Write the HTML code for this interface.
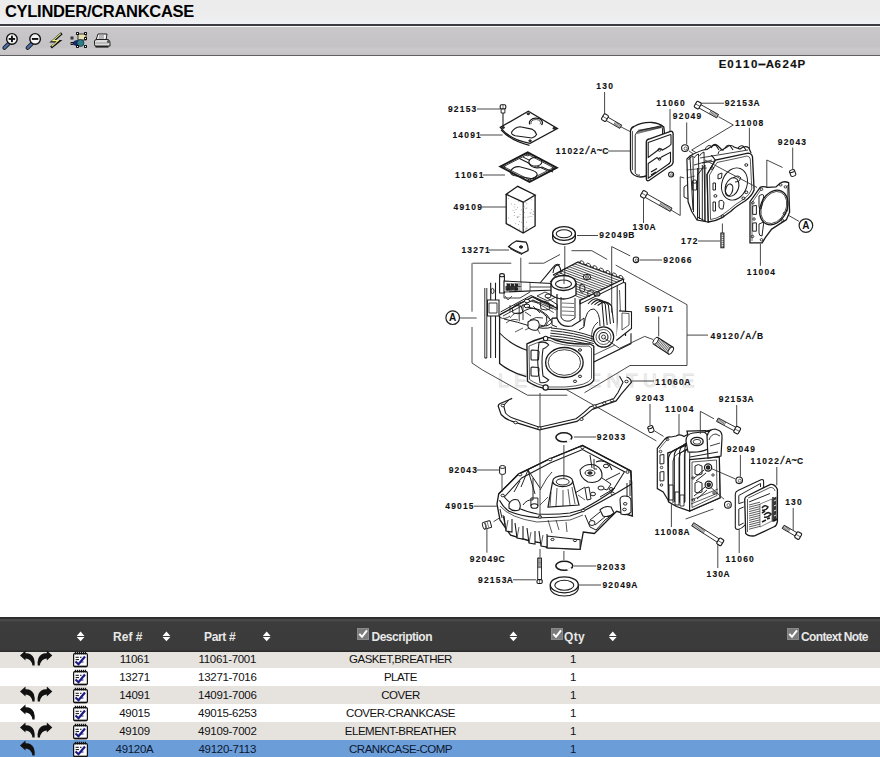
<!DOCTYPE html>
<html><head><meta charset="utf-8">
<style>
*{margin:0;padding:0;box-sizing:border-box}
html,body{width:880px;height:757px;overflow:hidden;background:#fff;font-family:"Liberation Sans",sans-serif}
.a{position:absolute}
#title{left:0;top:0;width:880px;height:24px;background:linear-gradient(#ececec,#ededed 60%,#eff1f5);}
#title span{position:absolute;left:5px;top:2px;font-size:16.5px;font-weight:bold;color:#000;letter-spacing:-0.3px}
#l1{left:0;top:24px;width:880px;height:2px;background:#3b3d42}
#l2{left:0;top:26px;width:880px;height:1px;background:#fafafa}
#tb{left:0;top:27px;width:880px;height:28px;background:linear-gradient(#c9c7ca,#c4c2c5 70%,#cbc9cc 80%,#c4c2c5)}
#l3{left:0;top:55px;width:880px;height:1px;background:#606060}
#th{left:0;top:617px;width:880px;height:35px;background:linear-gradient(#2c2d2c 0,#2c2d2c 2px,#4a4b4a 2px,#474847 4px,#3b3c3b 5px,#3a3b3a 33px,#2a2b2a 34px)}
.row{position:absolute;left:0;width:880px;background:#fff}
.row.g{background:#e6e3df}
.row.sel{background:#6b9dd8}
.c{position:absolute;width:160px;margin-left:-80px;text-align:center;font-size:11.5px;letter-spacing:-0.3px;color:#111;white-space:nowrap}
.sel .c{color:#0c1830}
.h{position:absolute;top:12.6px;font-size:12px;font-weight:bold;color:#e8e8e8;letter-spacing:-0.2px;white-space:nowrap}
svg{position:absolute;left:0;top:0}
</style></head><body>
<div id="title" class="a"><span>CYLINDER/CRANKCASE</span></div>
<div id="l1" class="a"></div><div id="l2" class="a"></div>
<div id="tb" class="a"></div>
<div id="l3" class="a"></div>
<div id="th" class="a">
<span class="h" style="left:113px;letter-spacing:0.05px">Ref #</span>
<span class="h" style="left:204px;letter-spacing:-0.35px">Part #</span>
<span class="h" style="left:371.5px;letter-spacing:-0.5px">Description</span>
<span class="h" style="left:564px;letter-spacing:0.3px">Qty</span>
<span class="h" style="left:801px;letter-spacing:-0.65px">Context Note</span>
</div>
<div class="row g" style="top:652px;height:16px"><span class="c" style="left:134.5px;top:1px">11061</span><span class="c" style="left:227.3px;top:1px">11061-7001</span><span class="c" style="left:400.5px;top:1px;letter-spacing:-0.5px">GASKET,BREATHER</span><span class="c" style="left:573px;top:1px">1</span></div>
<div class="row" style="top:668px;height:18px"><span class="c" style="left:134.5px;top:3px">13271</span><span class="c" style="left:227.3px;top:3px">13271-7016</span><span class="c" style="left:400.5px;top:3px;letter-spacing:-0.5px">PLATE</span><span class="c" style="left:573px;top:3px">1</span></div>
<div class="row g" style="top:686px;height:18px"><span class="c" style="left:134.5px;top:3px">14091</span><span class="c" style="left:227.3px;top:3px">14091-7006</span><span class="c" style="left:400.5px;top:3px;letter-spacing:-0.5px">COVER</span><span class="c" style="left:573px;top:3px">1</span></div>
<div class="row" style="top:704px;height:18px"><span class="c" style="left:134.5px;top:3px">49015</span><span class="c" style="left:227.3px;top:3px">49015-6253</span><span class="c" style="left:400.5px;top:3px;letter-spacing:-0.5px">COVER-CRANKCASE</span><span class="c" style="left:573px;top:3px">1</span></div>
<div class="row g" style="top:722px;height:18px"><span class="c" style="left:134.5px;top:3px">49109</span><span class="c" style="left:227.3px;top:3px">49109-7002</span><span class="c" style="left:400.5px;top:3px;letter-spacing:-0.5px">ELEMENT-BREATHER</span><span class="c" style="left:573px;top:3px">1</span></div>
<div class="row sel" style="top:740px;height:18px"><span class="c" style="left:134.5px;top:3px">49120A</span><span class="c" style="left:227.3px;top:3px">49120-7113</span><span class="c" style="left:400.5px;top:3px;letter-spacing:-0.5px">CRANKCASE-COMP</span><span class="c" style="left:573px;top:3px">1</span></div>
<svg width="880" height="757" viewBox="0 0 880 757">
<line x1="4.4" y1="47.9" x2="8.9" y2="43.4" stroke="#111" stroke-width="4" stroke-linecap="round"/><line x1="4.4" y1="47.9" x2="8.9" y2="43.4" stroke="#4a6fa8" stroke-width="2.2" stroke-linecap="round"/><circle cx="11.9" cy="38.9" r="5.3" fill="#f4f4f4" stroke="#111" stroke-width="1.4"/><rect x="8.7" y="38.0" width="6.4" height="1.9" fill="#111"/><rect x="11.0" y="35.699999999999996" width="1.9" height="6.4" fill="#111"/>
<line x1="27.6" y1="47.9" x2="32.1" y2="43.4" stroke="#111" stroke-width="4" stroke-linecap="round"/><line x1="27.6" y1="47.9" x2="32.1" y2="43.4" stroke="#4a6fa8" stroke-width="2.2" stroke-linecap="round"/><circle cx="35.1" cy="38.9" r="5.3" fill="#f4f4f4" stroke="#111" stroke-width="1.4"/><rect x="31.900000000000002" y="38.0" width="6.4" height="1.9" fill="#111"/>
<path d="M61.8,33.2 L52.8,41.2 L58.8,41.2 L51,47.6" fill="none" stroke="#111" stroke-width="2.6" stroke-linejoin="miter"/>
<path d="M60.8,33.6 L52.8,40.6 L58.2,40.6 L51.8,46.4" fill="none" stroke="#f0f08a" stroke-width="1.1"/>
<rect x="78" y="34" width="8" height="6" fill="#e8e0b0" stroke="#111" stroke-width="0.8"/>
<path d="M72,43 Q76,38 80,41 L80,46 Q75,47 72,43Z" fill="#1c2a6a"/>
<circle cx="80.5" cy="43" r="3.5" fill="#2a8080" stroke="#114" stroke-width="0.6"/>
<rect x="76.1" y="32.1" width="2.8" height="2.8" fill="#000"/><rect x="77.0" y="33.0" width="1" height="1" fill="#fff"/>
<rect x="84.1" y="32.1" width="2.8" height="2.8" fill="#000"/><rect x="85.0" y="33.0" width="1" height="1" fill="#fff"/>
<rect x="70.6" y="36.6" width="2.8" height="2.8" fill="#000"/><rect x="71.5" y="37.5" width="1" height="1" fill="#fff"/>
<rect x="84.1" y="37.1" width="2.8" height="2.8" fill="#000"/><rect x="85.0" y="38.0" width="1" height="1" fill="#fff"/>
<rect x="70.6" y="42.1" width="2.8" height="2.8" fill="#000"/><rect x="71.5" y="43.0" width="1" height="1" fill="#fff"/>
<rect x="76.1" y="45.1" width="2.8" height="2.8" fill="#000"/><rect x="77.0" y="46.0" width="1" height="1" fill="#fff"/>
<rect x="84.1" y="45.1" width="2.8" height="2.8" fill="#000"/><rect x="85.0" y="46.0" width="1" height="1" fill="#fff"/>
<path d="M98,34 L107,34 L106,40 L96,40 Z" fill="#f4f4f4" stroke="#111" stroke-width="0.9"/>
<line x1="99" y1="36" x2="104" y2="36" stroke="#444" stroke-width="0.7"/><line x1="98.5" y1="38" x2="104" y2="38" stroke="#444" stroke-width="0.7"/>
<path d="M94.5,41 Q95,39.5 97,39.5 L108,39.5 Q110,40 110,43 L110,46 L95,46 Q94.5,45 94.5,43Z" fill="#ddd" stroke="#111" stroke-width="0.9"/>
<rect x="95.5" y="46" width="13" height="1.6" fill="#222"/>
<line x1="95.5" y1="43" x2="108" y2="43" stroke="#888" stroke-width="0.8"/>
<circle cx="108.5" cy="41.5" r="1.6" fill="#555"/>
<path d="M80.6,631.6 L84.5,636 L76.69999999999999,636Z M76.69999999999999,637 L84.5,637 L80.6,641.2Z" fill="#fff"/>
<path d="M166.45,631.6 L170.35,636 L162.54999999999998,636Z M162.54999999999998,637 L170.35,637 L166.45,641.2Z" fill="#fff"/>
<path d="M266.7,631.6 L270.59999999999997,636 L262.8,636Z M262.8,637 L270.59999999999997,637 L266.7,641.2Z" fill="#fff"/>
<path d="M513.4,631.6 L517.3,636 L509.5,636Z M509.5,637 L517.3,637 L513.4,641.2Z" fill="#fff"/>
<path d="M612.75,631.6 L616.65,636 L608.85,636Z M608.85,637 L616.65,637 L612.75,641.2Z" fill="#fff"/>
<rect x="357.5" y="628.5" width="11" height="11" fill="#7b7b7b" stroke="#8a8a8a" stroke-width="1"/>
<path d="M359.3,633.8 L362,636.8 L367,630.3" fill="none" stroke="#fff" stroke-width="2"/>
<rect x="551.5" y="628.5" width="11" height="11" fill="#7b7b7b" stroke="#8a8a8a" stroke-width="1"/>
<path d="M553.3,633.8 L556,636.8 L561,630.3" fill="none" stroke="#fff" stroke-width="2"/>
<rect x="787.5" y="628.5" width="11" height="11" fill="#7b7b7b" stroke="#8a8a8a" stroke-width="1"/>
<path d="M789.3,633.8 L792,636.8 L797,630.3" fill="none" stroke="#fff" stroke-width="2"/>
<rect x="73.6" y="653.6" width="13.8" height="13" rx="1.2" fill="#fbfbfd" stroke="#111" stroke-width="1.2"/><line x1="74" y1="666.4" x2="87" y2="666.4" stroke="#111" stroke-width="1.5"/><rect x="74.8" y="651.8" width="1.3" height="2.6" fill="#111"/><rect x="76.8" y="651.8" width="1.3" height="2.6" fill="#111"/><rect x="78.8" y="651.8" width="1.3" height="2.6" fill="#111"/><rect x="80.8" y="651.8" width="1.3" height="2.6" fill="#111"/><rect x="82.8" y="651.8" width="1.3" height="2.6" fill="#111"/><rect x="84.8" y="651.8" width="1.3" height="2.6" fill="#111"/><line x1="75.6" y1="657.3" x2="78.8" y2="657.3" stroke="#111" stroke-width="1"/><line x1="80" y1="657.3" x2="81.5" y2="657.3" stroke="#111" stroke-width="1"/><line x1="75.6" y1="659.6" x2="79" y2="659.6" stroke="#111" stroke-width="1"/><path d="M75.5,661.5 L78.5,664.2 L85,656.5" fill="none" stroke="#1a1a80" stroke-width="2.2"/><line x1="80.5" y1="662" x2="83.5" y2="662" stroke="#1a1a80" stroke-width="1"/>
<rect x="73.6" y="671.6" width="13.8" height="13" rx="1.2" fill="#fbfbfd" stroke="#111" stroke-width="1.2"/><line x1="74" y1="684.4" x2="87" y2="684.4" stroke="#111" stroke-width="1.5"/><rect x="74.8" y="669.8" width="1.3" height="2.6" fill="#111"/><rect x="76.8" y="669.8" width="1.3" height="2.6" fill="#111"/><rect x="78.8" y="669.8" width="1.3" height="2.6" fill="#111"/><rect x="80.8" y="669.8" width="1.3" height="2.6" fill="#111"/><rect x="82.8" y="669.8" width="1.3" height="2.6" fill="#111"/><rect x="84.8" y="669.8" width="1.3" height="2.6" fill="#111"/><line x1="75.6" y1="675.3" x2="78.8" y2="675.3" stroke="#111" stroke-width="1"/><line x1="80" y1="675.3" x2="81.5" y2="675.3" stroke="#111" stroke-width="1"/><line x1="75.6" y1="677.6" x2="79" y2="677.6" stroke="#111" stroke-width="1"/><path d="M75.5,679.5 L78.5,682.2 L85,674.5" fill="none" stroke="#1a1a80" stroke-width="2.2"/><line x1="80.5" y1="680" x2="83.5" y2="680" stroke="#1a1a80" stroke-width="1"/>
<rect x="73.6" y="689.6" width="13.8" height="13" rx="1.2" fill="#fbfbfd" stroke="#111" stroke-width="1.2"/><line x1="74" y1="702.4" x2="87" y2="702.4" stroke="#111" stroke-width="1.5"/><rect x="74.8" y="687.8" width="1.3" height="2.6" fill="#111"/><rect x="76.8" y="687.8" width="1.3" height="2.6" fill="#111"/><rect x="78.8" y="687.8" width="1.3" height="2.6" fill="#111"/><rect x="80.8" y="687.8" width="1.3" height="2.6" fill="#111"/><rect x="82.8" y="687.8" width="1.3" height="2.6" fill="#111"/><rect x="84.8" y="687.8" width="1.3" height="2.6" fill="#111"/><line x1="75.6" y1="693.3" x2="78.8" y2="693.3" stroke="#111" stroke-width="1"/><line x1="80" y1="693.3" x2="81.5" y2="693.3" stroke="#111" stroke-width="1"/><line x1="75.6" y1="695.6" x2="79" y2="695.6" stroke="#111" stroke-width="1"/><path d="M75.5,697.5 L78.5,700.2 L85,692.5" fill="none" stroke="#1a1a80" stroke-width="2.2"/><line x1="80.5" y1="698" x2="83.5" y2="698" stroke="#1a1a80" stroke-width="1"/>
<rect x="73.6" y="707.6" width="13.8" height="13" rx="1.2" fill="#fbfbfd" stroke="#111" stroke-width="1.2"/><line x1="74" y1="720.4" x2="87" y2="720.4" stroke="#111" stroke-width="1.5"/><rect x="74.8" y="705.8" width="1.3" height="2.6" fill="#111"/><rect x="76.8" y="705.8" width="1.3" height="2.6" fill="#111"/><rect x="78.8" y="705.8" width="1.3" height="2.6" fill="#111"/><rect x="80.8" y="705.8" width="1.3" height="2.6" fill="#111"/><rect x="82.8" y="705.8" width="1.3" height="2.6" fill="#111"/><rect x="84.8" y="705.8" width="1.3" height="2.6" fill="#111"/><line x1="75.6" y1="711.3" x2="78.8" y2="711.3" stroke="#111" stroke-width="1"/><line x1="80" y1="711.3" x2="81.5" y2="711.3" stroke="#111" stroke-width="1"/><line x1="75.6" y1="713.6" x2="79" y2="713.6" stroke="#111" stroke-width="1"/><path d="M75.5,715.5 L78.5,718.2 L85,710.5" fill="none" stroke="#1a1a80" stroke-width="2.2"/><line x1="80.5" y1="716" x2="83.5" y2="716" stroke="#1a1a80" stroke-width="1"/>
<rect x="73.6" y="725.6" width="13.8" height="13" rx="1.2" fill="#fbfbfd" stroke="#111" stroke-width="1.2"/><line x1="74" y1="738.4" x2="87" y2="738.4" stroke="#111" stroke-width="1.5"/><rect x="74.8" y="723.8" width="1.3" height="2.6" fill="#111"/><rect x="76.8" y="723.8" width="1.3" height="2.6" fill="#111"/><rect x="78.8" y="723.8" width="1.3" height="2.6" fill="#111"/><rect x="80.8" y="723.8" width="1.3" height="2.6" fill="#111"/><rect x="82.8" y="723.8" width="1.3" height="2.6" fill="#111"/><rect x="84.8" y="723.8" width="1.3" height="2.6" fill="#111"/><line x1="75.6" y1="729.3" x2="78.8" y2="729.3" stroke="#111" stroke-width="1"/><line x1="80" y1="729.3" x2="81.5" y2="729.3" stroke="#111" stroke-width="1"/><line x1="75.6" y1="731.6" x2="79" y2="731.6" stroke="#111" stroke-width="1"/><path d="M75.5,733.5 L78.5,736.2 L85,728.5" fill="none" stroke="#1a1a80" stroke-width="2.2"/><line x1="80.5" y1="734" x2="83.5" y2="734" stroke="#1a1a80" stroke-width="1"/>
<rect x="73.6" y="743.6" width="13.8" height="13" rx="1.2" fill="#fbfbfd" stroke="#111" stroke-width="1.2"/><line x1="74" y1="756.4" x2="87" y2="756.4" stroke="#111" stroke-width="1.5"/><rect x="74.8" y="741.8" width="1.3" height="2.6" fill="#111"/><rect x="76.8" y="741.8" width="1.3" height="2.6" fill="#111"/><rect x="78.8" y="741.8" width="1.3" height="2.6" fill="#111"/><rect x="80.8" y="741.8" width="1.3" height="2.6" fill="#111"/><rect x="82.8" y="741.8" width="1.3" height="2.6" fill="#111"/><rect x="84.8" y="741.8" width="1.3" height="2.6" fill="#111"/><line x1="75.6" y1="747.3" x2="78.8" y2="747.3" stroke="#111" stroke-width="1"/><line x1="80" y1="747.3" x2="81.5" y2="747.3" stroke="#111" stroke-width="1"/><line x1="75.6" y1="749.6" x2="79" y2="749.6" stroke="#111" stroke-width="1"/><path d="M75.5,751.5 L78.5,754.2 L85,746.5" fill="none" stroke="#1a1a80" stroke-width="2.2"/><line x1="80.5" y1="752" x2="83.5" y2="752" stroke="#1a1a80" stroke-width="1"/>
<path d="M20,655.5 L25.5,650.5 L25.5,653.2 Q31.5,652.8 33.8,658 Q35.2,662 34.6,665.5 L32.4,665.5 Q32,662.2 30,660.2 Q28,658.4 25.5,658.4 L25.5,660.5 Z" fill="#111"/>
<path d="M52.3,655.5 L46.8,650.5 L46.8,653.2 Q40.8,652.8 38.5,658 Q37.1,662 37.7,665.5 L39.9,665.5 Q40.3,662.2 42.3,660.2 Q44.3,658.4 46.8,658.4 L46.8,660.5 Z" fill="#111"/>
<path d="M20,691.5 L25.5,686.5 L25.5,689.2 Q31.5,688.8 33.8,694 Q35.2,698 34.6,701.5 L32.4,701.5 Q32,698.2 30,696.2 Q28,694.4 25.5,694.4 L25.5,696.5 Z" fill="#111"/>
<path d="M52.3,691.5 L46.8,686.5 L46.8,689.2 Q40.8,688.8 38.5,694 Q37.1,698 37.7,701.5 L39.9,701.5 Q40.3,698.2 42.3,696.2 Q44.3,694.4 46.8,694.4 L46.8,696.5 Z" fill="#111"/>
<path d="M20,709.5 L25.5,704.5 L25.5,707.2 Q31.5,706.8 33.8,712 Q35.2,716 34.6,719.5 L32.4,719.5 Q32,716.2 30,714.2 Q28,712.4 25.5,712.4 L25.5,714.5 Z" fill="#111"/>
<path d="M20,727.5 L25.5,722.5 L25.5,725.2 Q31.5,724.8 33.8,730 Q35.2,734 34.6,737.5 L32.4,737.5 Q32,734.2 30,732.2 Q28,730.4 25.5,730.4 L25.5,732.5 Z" fill="#111"/>
<path d="M52.3,727.5 L46.8,722.5 L46.8,725.2 Q40.8,724.8 38.5,730 Q37.1,734 37.7,737.5 L39.9,737.5 Q40.3,734.2 42.3,732.2 Q44.3,730.4 46.8,730.4 L46.8,732.5 Z" fill="#111"/>
<path d="M20,745.5 L25.5,740.5 L25.5,743.2 Q31.5,742.8 33.8,748 Q35.2,752 34.6,755.5 L32.4,755.5 Q32,752.2 30,750.2 Q28,748.4 25.5,748.4 L25.5,750.5 Z" fill="#111"/>
<text x="498" y="387" font-family="Liberation Sans" font-size="19" letter-spacing="5.6" fill="none" stroke="#e2e2e2" stroke-width="1">LEADVENTURE</text>
<g font-family="Liberation Sans" font-weight="bold" fill="#111" stroke="#111" stroke-width="0.15">
<g font-size="11.5" text-anchor="middle"><text x="722.70" y="68.3" transform="matrix(1.0 0 0 1 0.00 0)">E</text><text x="730.56" y="68.3" transform="matrix(1.0 0 0 1 0.00 0)">0</text><text x="738.42" y="68.3" transform="matrix(1.0 0 0 1 0.00 0)">1</text><text x="746.28" y="68.3" transform="matrix(1.0 0 0 1 0.00 0)">1</text><text x="754.14" y="68.3" transform="matrix(1.0 0 0 1 0.00 0)">0</text><rect x="758.60" y="63.70" width="6.8" height="1.6" fill="#111"/><text x="769.86" y="68.3" transform="matrix(1.0 0 0 1 0.00 0)">A</text><text x="777.72" y="68.3" transform="matrix(1.0 0 0 1 0.00 0)">6</text><text x="785.58" y="68.3" transform="matrix(1.0 0 0 1 0.00 0)">2</text><text x="793.44" y="68.3" transform="matrix(1.0 0 0 1 0.00 0)">4</text><text x="801.30" y="68.3" transform="matrix(1.0 0 0 1 0.00 0)">P</text></g>
<g font-size="9.6" text-anchor="middle"><text x="598.70" y="88.9" transform="matrix(0.88 0 0 1 71.84 0)">1</text><text x="604.60" y="88.9" transform="matrix(0.88 0 0 1 72.55 0)">3</text><text x="610.50" y="88.9" transform="matrix(0.88 0 0 1 73.26 0)">0</text></g>
<g font-size="9.6" text-anchor="middle"><text x="450.30" y="112.0" transform="matrix(0.88 0 0 1 54.04 0)">9</text><text x="456.20" y="112.0" transform="matrix(0.88 0 0 1 54.74 0)">2</text><text x="462.10" y="112.0" transform="matrix(0.88 0 0 1 55.45 0)">1</text><text x="468.00" y="112.0" transform="matrix(0.88 0 0 1 56.16 0)">5</text><text x="473.90" y="112.0" transform="matrix(0.88 0 0 1 56.87 0)">3</text></g>
<g font-size="9.6" text-anchor="middle"><text x="658.70" y="106.2" transform="matrix(0.88 0 0 1 79.04 0)">1</text><text x="664.60" y="106.2" transform="matrix(0.88 0 0 1 79.75 0)">1</text><text x="670.50" y="106.2" transform="matrix(0.88 0 0 1 80.46 0)">0</text><text x="676.40" y="106.2" transform="matrix(0.88 0 0 1 81.17 0)">6</text><text x="682.30" y="106.2" transform="matrix(0.88 0 0 1 81.88 0)">0</text></g>
<g font-size="9.6" text-anchor="middle"><text x="727.00" y="106.10000000000001" transform="matrix(0.88 0 0 1 87.24 0)">9</text><text x="732.90" y="106.10000000000001" transform="matrix(0.88 0 0 1 87.95 0)">2</text><text x="738.80" y="106.10000000000001" transform="matrix(0.88 0 0 1 88.66 0)">1</text><text x="744.70" y="106.10000000000001" transform="matrix(0.88 0 0 1 89.36 0)">5</text><text x="750.60" y="106.10000000000001" transform="matrix(0.88 0 0 1 90.07 0)">3</text><text x="756.50" y="106.10000000000001" transform="matrix(0.88 0 0 1 90.78 0)">A</text></g>
<g font-size="9.6" text-anchor="middle"><text x="675.20" y="119.4" transform="matrix(0.88 0 0 1 81.02 0)">9</text><text x="681.10" y="119.4" transform="matrix(0.88 0 0 1 81.73 0)">2</text><text x="687.00" y="119.4" transform="matrix(0.88 0 0 1 82.44 0)">0</text><text x="692.90" y="119.4" transform="matrix(0.88 0 0 1 83.15 0)">4</text><text x="698.80" y="119.4" transform="matrix(0.88 0 0 1 83.86 0)">9</text></g>
<g font-size="9.6" text-anchor="middle"><text x="737.30" y="125.60000000000001" transform="matrix(0.88 0 0 1 88.48 0)">1</text><text x="743.20" y="125.60000000000001" transform="matrix(0.88 0 0 1 89.18 0)">1</text><text x="749.10" y="125.60000000000001" transform="matrix(0.88 0 0 1 89.89 0)">0</text><text x="755.00" y="125.60000000000001" transform="matrix(0.88 0 0 1 90.60 0)">0</text><text x="760.90" y="125.60000000000001" transform="matrix(0.88 0 0 1 91.31 0)">8</text></g>
<g font-size="9.6" text-anchor="middle"><text x="454.80" y="137.7" transform="matrix(0.88 0 0 1 54.58 0)">1</text><text x="460.70" y="137.7" transform="matrix(0.88 0 0 1 55.28 0)">4</text><text x="466.60" y="137.7" transform="matrix(0.88 0 0 1 55.99 0)">0</text><text x="472.50" y="137.7" transform="matrix(0.88 0 0 1 56.70 0)">9</text><text x="478.40" y="137.7" transform="matrix(0.88 0 0 1 57.41 0)">1</text></g>
<g font-size="9.6" text-anchor="middle"><text x="558.00" y="153.7" transform="matrix(0.88 0 0 1 66.96 0)">1</text><text x="563.90" y="153.7" transform="matrix(0.88 0 0 1 67.67 0)">1</text><text x="569.80" y="153.7" transform="matrix(0.88 0 0 1 68.38 0)">0</text><text x="575.70" y="153.7" transform="matrix(0.88 0 0 1 69.08 0)">2</text><text x="581.60" y="153.7" transform="matrix(0.88 0 0 1 69.79 0)">2</text><text x="587.50" y="153.7" transform="matrix(0.88 0 0 1 70.50 0)" font-family="Liberation Mono" font-size="10.1" font-weight="normal" stroke="#111" stroke-width="0.45">/</text><text x="593.40" y="153.7" transform="matrix(0.88 0 0 1 71.21 0)">A</text><text x="599.30" y="153.7" transform="matrix(0.88 0 0 1 71.92 0)" font-family="Liberation Mono" font-size="10.1" font-weight="normal" stroke="#111" stroke-width="0.45">~</text><text x="605.20" y="153.7" transform="matrix(0.88 0 0 1 72.62 0)">C</text></g>
<g font-size="9.6" text-anchor="middle"><text x="780.10" y="144.89999999999998" transform="matrix(0.88 0 0 1 93.61 0)">9</text><text x="786.00" y="144.89999999999998" transform="matrix(0.88 0 0 1 94.32 0)">2</text><text x="791.90" y="144.89999999999998" transform="matrix(0.88 0 0 1 95.03 0)">0</text><text x="797.80" y="144.89999999999998" transform="matrix(0.88 0 0 1 95.74 0)">4</text><text x="803.70" y="144.89999999999998" transform="matrix(0.88 0 0 1 96.44 0)">3</text></g>
<g font-size="9.6" text-anchor="middle"><text x="457.40" y="178.0" transform="matrix(0.88 0 0 1 54.89 0)">1</text><text x="463.30" y="178.0" transform="matrix(0.88 0 0 1 55.60 0)">1</text><text x="469.20" y="178.0" transform="matrix(0.88 0 0 1 56.30 0)">0</text><text x="475.10" y="178.0" transform="matrix(0.88 0 0 1 57.01 0)">6</text><text x="481.00" y="178.0" transform="matrix(0.88 0 0 1 57.72 0)">1</text></g>
<g font-size="9.6" text-anchor="middle"><text x="455.90" y="209.79999999999998" transform="matrix(0.88 0 0 1 54.71 0)">4</text><text x="461.80" y="209.79999999999998" transform="matrix(0.88 0 0 1 55.42 0)">9</text><text x="467.70" y="209.79999999999998" transform="matrix(0.88 0 0 1 56.12 0)">1</text><text x="473.60" y="209.79999999999998" transform="matrix(0.88 0 0 1 56.83 0)">0</text><text x="479.50" y="209.79999999999998" transform="matrix(0.88 0 0 1 57.54 0)">9</text></g>
<g font-size="9.6" text-anchor="middle"><text x="634.90" y="230.5" transform="matrix(0.88 0 0 1 76.19 0)">1</text><text x="640.80" y="230.5" transform="matrix(0.88 0 0 1 76.90 0)">3</text><text x="646.70" y="230.5" transform="matrix(0.88 0 0 1 77.60 0)">0</text><text x="652.60" y="230.5" transform="matrix(0.88 0 0 1 78.31 0)">A</text></g>
<g font-size="9.6" text-anchor="middle"><text x="601.70" y="238.2" transform="matrix(0.88 0 0 1 72.20 0)">9</text><text x="607.60" y="238.2" transform="matrix(0.88 0 0 1 72.91 0)">2</text><text x="613.50" y="238.2" transform="matrix(0.88 0 0 1 73.62 0)">0</text><text x="619.40" y="238.2" transform="matrix(0.88 0 0 1 74.33 0)">4</text><text x="625.30" y="238.2" transform="matrix(0.88 0 0 1 75.04 0)">9</text><text x="631.20" y="238.2" transform="matrix(0.88 0 0 1 75.74 0)">B</text></g>
<g font-size="9.6" text-anchor="middle"><text x="683.40" y="243.6" transform="matrix(0.88 0 0 1 82.01 0)">1</text><text x="689.30" y="243.6" transform="matrix(0.88 0 0 1 82.72 0)">7</text><text x="695.20" y="243.6" transform="matrix(0.88 0 0 1 83.42 0)">2</text></g>
<g font-size="9.6" text-anchor="middle"><text x="463.80" y="252.89999999999998" transform="matrix(0.88 0 0 1 55.66 0)">1</text><text x="469.70" y="252.89999999999998" transform="matrix(0.88 0 0 1 56.36 0)">3</text><text x="475.60" y="252.89999999999998" transform="matrix(0.88 0 0 1 57.07 0)">2</text><text x="481.50" y="252.89999999999998" transform="matrix(0.88 0 0 1 57.78 0)">7</text><text x="487.40" y="252.89999999999998" transform="matrix(0.88 0 0 1 58.49 0)">1</text></g>
<g font-size="9.6" text-anchor="middle"><text x="665.60" y="263.5" transform="matrix(0.88 0 0 1 79.87 0)">9</text><text x="671.50" y="263.5" transform="matrix(0.88 0 0 1 80.58 0)">2</text><text x="677.40" y="263.5" transform="matrix(0.88 0 0 1 81.29 0)">0</text><text x="683.30" y="263.5" transform="matrix(0.88 0 0 1 82.00 0)">6</text><text x="689.20" y="263.5" transform="matrix(0.88 0 0 1 82.70 0)">6</text></g>
<g font-size="9.6" text-anchor="middle"><text x="749.10" y="275.0" transform="matrix(0.88 0 0 1 89.89 0)">1</text><text x="755.00" y="275.0" transform="matrix(0.88 0 0 1 90.60 0)">1</text><text x="760.90" y="275.0" transform="matrix(0.88 0 0 1 91.31 0)">0</text><text x="766.80" y="275.0" transform="matrix(0.88 0 0 1 92.02 0)">0</text><text x="772.70" y="275.0" transform="matrix(0.88 0 0 1 92.72 0)">4</text></g>
<g font-size="9.6" text-anchor="middle"><text x="647.10" y="312.3" transform="matrix(0.88 0 0 1 77.65 0)">5</text><text x="653.00" y="312.3" transform="matrix(0.88 0 0 1 78.36 0)">9</text><text x="658.90" y="312.3" transform="matrix(0.88 0 0 1 79.07 0)">0</text><text x="664.80" y="312.3" transform="matrix(0.88 0 0 1 79.78 0)">7</text><text x="670.70" y="312.3" transform="matrix(0.88 0 0 1 80.48 0)">1</text></g>
<g font-size="9.6" text-anchor="middle"><text x="712.90" y="338.7" transform="matrix(0.88 0 0 1 85.55 0)">4</text><text x="718.80" y="338.7" transform="matrix(0.88 0 0 1 86.26 0)">9</text><text x="724.70" y="338.7" transform="matrix(0.88 0 0 1 86.96 0)">1</text><text x="730.60" y="338.7" transform="matrix(0.88 0 0 1 87.67 0)">2</text><text x="736.50" y="338.7" transform="matrix(0.88 0 0 1 88.38 0)">0</text><text x="742.40" y="338.7" transform="matrix(0.88 0 0 1 89.09 0)" font-family="Liberation Mono" font-size="10.1" font-weight="normal" stroke="#111" stroke-width="0.45">/</text><text x="748.30" y="338.7" transform="matrix(0.88 0 0 1 89.80 0)">A</text><text x="754.20" y="338.7" transform="matrix(0.88 0 0 1 90.50 0)" font-family="Liberation Mono" font-size="10.1" font-weight="normal" stroke="#111" stroke-width="0.45">/</text><text x="760.10" y="338.7" transform="matrix(0.88 0 0 1 91.21 0)">B</text></g>
<g font-size="9.6" text-anchor="middle"><text x="657.70" y="385.0" transform="matrix(0.88 0 0 1 78.92 0)">1</text><text x="663.60" y="385.0" transform="matrix(0.88 0 0 1 79.63 0)">1</text><text x="669.50" y="385.0" transform="matrix(0.88 0 0 1 80.34 0)">0</text><text x="675.40" y="385.0" transform="matrix(0.88 0 0 1 81.05 0)">6</text><text x="681.30" y="385.0" transform="matrix(0.88 0 0 1 81.76 0)">0</text><text x="687.20" y="385.0" transform="matrix(0.88 0 0 1 82.46 0)">A</text></g>
<g font-size="9.6" text-anchor="middle"><text x="637.90" y="400.9" transform="matrix(0.88 0 0 1 76.55 0)">9</text><text x="643.80" y="400.9" transform="matrix(0.88 0 0 1 77.26 0)">2</text><text x="649.70" y="400.9" transform="matrix(0.88 0 0 1 77.96 0)">0</text><text x="655.60" y="400.9" transform="matrix(0.88 0 0 1 78.67 0)">4</text><text x="661.50" y="400.9" transform="matrix(0.88 0 0 1 79.38 0)">3</text></g>
<g font-size="9.6" text-anchor="middle"><text x="721.10" y="402.2" transform="matrix(0.88 0 0 1 86.53 0)">9</text><text x="727.00" y="402.2" transform="matrix(0.88 0 0 1 87.24 0)">2</text><text x="732.90" y="402.2" transform="matrix(0.88 0 0 1 87.95 0)">1</text><text x="738.80" y="402.2" transform="matrix(0.88 0 0 1 88.66 0)">5</text><text x="744.70" y="402.2" transform="matrix(0.88 0 0 1 89.36 0)">3</text><text x="750.60" y="402.2" transform="matrix(0.88 0 0 1 90.07 0)">A</text></g>
<g font-size="9.6" text-anchor="middle"><text x="667.40" y="412.0" transform="matrix(0.88 0 0 1 80.09 0)">1</text><text x="673.30" y="412.0" transform="matrix(0.88 0 0 1 80.80 0)">1</text><text x="679.20" y="412.0" transform="matrix(0.88 0 0 1 81.50 0)">0</text><text x="685.10" y="412.0" transform="matrix(0.88 0 0 1 82.21 0)">0</text><text x="691.00" y="412.0" transform="matrix(0.88 0 0 1 82.92 0)">4</text></g>
<g font-size="9.6" text-anchor="middle"><text x="599.20" y="440.09999999999997" transform="matrix(0.88 0 0 1 71.90 0)">9</text><text x="605.10" y="440.09999999999997" transform="matrix(0.88 0 0 1 72.61 0)">2</text><text x="611.00" y="440.09999999999997" transform="matrix(0.88 0 0 1 73.32 0)">0</text><text x="616.90" y="440.09999999999997" transform="matrix(0.88 0 0 1 74.03 0)">3</text><text x="622.80" y="440.09999999999997" transform="matrix(0.88 0 0 1 74.74 0)">3</text></g>
<g font-size="9.6" text-anchor="middle"><text x="729.00" y="452.4" transform="matrix(0.88 0 0 1 87.48 0)">9</text><text x="734.90" y="452.4" transform="matrix(0.88 0 0 1 88.19 0)">2</text><text x="740.80" y="452.4" transform="matrix(0.88 0 0 1 88.90 0)">0</text><text x="746.70" y="452.4" transform="matrix(0.88 0 0 1 89.60 0)">4</text><text x="752.60" y="452.4" transform="matrix(0.88 0 0 1 90.31 0)">9</text></g>
<g font-size="9.6" text-anchor="middle"><text x="752.90" y="463.7" transform="matrix(0.88 0 0 1 90.35 0)">1</text><text x="758.80" y="463.7" transform="matrix(0.88 0 0 1 91.06 0)">1</text><text x="764.70" y="463.7" transform="matrix(0.88 0 0 1 91.76 0)">0</text><text x="770.60" y="463.7" transform="matrix(0.88 0 0 1 92.47 0)">2</text><text x="776.50" y="463.7" transform="matrix(0.88 0 0 1 93.18 0)">2</text><text x="782.40" y="463.7" transform="matrix(0.88 0 0 1 93.89 0)" font-family="Liberation Mono" font-size="10.1" font-weight="normal" stroke="#111" stroke-width="0.45">/</text><text x="788.30" y="463.7" transform="matrix(0.88 0 0 1 94.60 0)">A</text><text x="794.20" y="463.7" transform="matrix(0.88 0 0 1 95.30 0)" font-family="Liberation Mono" font-size="10.1" font-weight="normal" stroke="#111" stroke-width="0.45">~</text><text x="800.10" y="463.7" transform="matrix(0.88 0 0 1 96.01 0)">C</text></g>
<g font-size="9.6" text-anchor="middle"><text x="451.00" y="473.3" transform="matrix(0.88 0 0 1 54.12 0)">9</text><text x="456.90" y="473.3" transform="matrix(0.88 0 0 1 54.83 0)">2</text><text x="462.80" y="473.3" transform="matrix(0.88 0 0 1 55.54 0)">0</text><text x="468.70" y="473.3" transform="matrix(0.88 0 0 1 56.24 0)">4</text><text x="474.60" y="473.3" transform="matrix(0.88 0 0 1 56.95 0)">3</text></g>
<g font-size="9.6" text-anchor="middle"><text x="447.60" y="509.3" transform="matrix(0.88 0 0 1 53.71 0)">4</text><text x="453.50" y="509.3" transform="matrix(0.88 0 0 1 54.42 0)">9</text><text x="459.40" y="509.3" transform="matrix(0.88 0 0 1 55.13 0)">0</text><text x="465.30" y="509.3" transform="matrix(0.88 0 0 1 55.84 0)">1</text><text x="471.20" y="509.3" transform="matrix(0.88 0 0 1 56.54 0)">5</text></g>
<g font-size="9.6" text-anchor="middle"><text x="787.50" y="505.09999999999997" transform="matrix(0.88 0 0 1 94.50 0)">1</text><text x="793.40" y="505.09999999999997" transform="matrix(0.88 0 0 1 95.21 0)">3</text><text x="799.30" y="505.09999999999997" transform="matrix(0.88 0 0 1 95.92 0)">0</text></g>
<g font-size="9.6" text-anchor="middle"><text x="657.00" y="535.3000000000001" transform="matrix(0.88 0 0 1 78.84 0)">1</text><text x="662.90" y="535.3000000000001" transform="matrix(0.88 0 0 1 79.55 0)">1</text><text x="668.80" y="535.3000000000001" transform="matrix(0.88 0 0 1 80.26 0)">0</text><text x="674.70" y="535.3000000000001" transform="matrix(0.88 0 0 1 80.96 0)">0</text><text x="680.60" y="535.3000000000001" transform="matrix(0.88 0 0 1 81.67 0)">8</text><text x="686.50" y="535.3000000000001" transform="matrix(0.88 0 0 1 82.38 0)">A</text></g>
<g font-size="9.6" text-anchor="middle"><text x="472.10" y="561.7" transform="matrix(0.88 0 0 1 56.65 0)">9</text><text x="478.00" y="561.7" transform="matrix(0.88 0 0 1 57.36 0)">2</text><text x="483.90" y="561.7" transform="matrix(0.88 0 0 1 58.07 0)">0</text><text x="489.80" y="561.7" transform="matrix(0.88 0 0 1 58.78 0)">4</text><text x="495.70" y="561.7" transform="matrix(0.88 0 0 1 59.48 0)">9</text><text x="501.60" y="561.7" transform="matrix(0.88 0 0 1 60.19 0)">C</text></g>
<g font-size="9.6" text-anchor="middle"><text x="727.80" y="561.7" transform="matrix(0.88 0 0 1 87.34 0)">1</text><text x="733.70" y="561.7" transform="matrix(0.88 0 0 1 88.04 0)">1</text><text x="739.60" y="561.7" transform="matrix(0.88 0 0 1 88.75 0)">0</text><text x="745.50" y="561.7" transform="matrix(0.88 0 0 1 89.46 0)">6</text><text x="751.40" y="561.7" transform="matrix(0.88 0 0 1 90.17 0)">0</text></g>
<g font-size="9.6" text-anchor="middle"><text x="599.20" y="570.0" transform="matrix(0.88 0 0 1 71.90 0)">9</text><text x="605.10" y="570.0" transform="matrix(0.88 0 0 1 72.61 0)">2</text><text x="611.00" y="570.0" transform="matrix(0.88 0 0 1 73.32 0)">0</text><text x="616.90" y="570.0" transform="matrix(0.88 0 0 1 74.03 0)">3</text><text x="622.80" y="570.0" transform="matrix(0.88 0 0 1 74.74 0)">3</text></g>
<g font-size="9.6" text-anchor="middle"><text x="708.90" y="576.7" transform="matrix(0.88 0 0 1 85.07 0)">1</text><text x="714.80" y="576.7" transform="matrix(0.88 0 0 1 85.78 0)">3</text><text x="720.70" y="576.7" transform="matrix(0.88 0 0 1 86.48 0)">0</text><text x="726.60" y="576.7" transform="matrix(0.88 0 0 1 87.19 0)">A</text></g>
<g font-size="9.6" text-anchor="middle"><text x="480.40" y="582.7" transform="matrix(0.88 0 0 1 57.65 0)">9</text><text x="486.30" y="582.7" transform="matrix(0.88 0 0 1 58.36 0)">2</text><text x="492.20" y="582.7" transform="matrix(0.88 0 0 1 59.06 0)">1</text><text x="498.10" y="582.7" transform="matrix(0.88 0 0 1 59.77 0)">5</text><text x="504.00" y="582.7" transform="matrix(0.88 0 0 1 60.48 0)">3</text><text x="509.90" y="582.7" transform="matrix(0.88 0 0 1 61.19 0)">A</text></g>
<g font-size="9.6" text-anchor="middle"><text x="604.80" y="587.9000000000001" transform="matrix(0.88 0 0 1 72.58 0)">9</text><text x="610.70" y="587.9000000000001" transform="matrix(0.88 0 0 1 73.28 0)">2</text><text x="616.60" y="587.9000000000001" transform="matrix(0.88 0 0 1 73.99 0)">0</text><text x="622.50" y="587.9000000000001" transform="matrix(0.88 0 0 1 74.70 0)">4</text><text x="628.40" y="587.9000000000001" transform="matrix(0.88 0 0 1 75.41 0)">9</text><text x="634.30" y="587.9000000000001" transform="matrix(0.88 0 0 1 76.12 0)">A</text></g>
</g>
<circle cx="452.7" cy="317.7" r="6.8" fill="#fff" stroke="#222" stroke-width="1.20"/>
<text x="452.7" y="321.3" font-family="Liberation Sans" font-weight="bold" font-size="10" text-anchor="middle" fill="#111">A</text>
<circle cx="805.9" cy="225.6" r="6.8" fill="#fff" stroke="#222" stroke-width="1.20"/>
<text x="805.9" y="229.2" font-family="Liberation Sans" font-weight="bold" font-size="10" text-anchor="middle" fill="#111">A</text>
<path d="M477,109 L500,109" fill="none" stroke="#333" stroke-width="0.9" />
<path d="M480,135 L502.6,135" fill="none" stroke="#333" stroke-width="0.9" />
<path d="M483,175 L505,175" fill="none" stroke="#333" stroke-width="0.9" />
<path d="M482,207 L506,207" fill="none" stroke="#333" stroke-width="0.9" />
<path d="M489,250 L509,250" fill="none" stroke="#333" stroke-width="0.9" />
<path d="M604.6,92 L604.6,115" fill="none" stroke="#333" stroke-width="0.9" />
<path d="M620.8,126.8 L630,131.5" fill="none" stroke="#333" stroke-width="0.9" />
<path d="M608,151 L630,151" fill="none" stroke="#333" stroke-width="0.9" />
<path d="M670,109 L670,131.6" fill="none" stroke="#333" stroke-width="0.9" />
<path d="M686.7,122.4 L686.7,144.2" fill="none" stroke="#333" stroke-width="0.9" />
<path d="M700,103.2 L724,103.2" fill="none" stroke="#333" stroke-width="0.9" />
<path d="M718.5,116.7 L733.3,125 L691.7,150 L705.5,158.3" fill="none" stroke="#333" stroke-width="0.9" />
<path d="M688.9,150.9 L694.9,155" fill="none" stroke="#333" stroke-width="0.9" />
<path d="M749.4,127.8 L749.4,151.6" fill="none" stroke="#333" stroke-width="0.9" />
<path d="M792.7,147.6 L792.7,169" fill="none" stroke="#333" stroke-width="0.9" />
<path d="M782.6,167.5 L766.8,160 L766.8,188.6" fill="none" stroke="#333" stroke-width="0.9" />
<path d="M643.5,198.4 L643.5,223" fill="none" stroke="#333" stroke-width="0.9" />
<path d="M671,210 L680.2,215.5 L680.2,176.8 L684.2,178" fill="none" stroke="#333" stroke-width="0.9" />
<path d="M698,241 L720,241" fill="none" stroke="#333" stroke-width="0.9" />
<path d="M722.4,223.5 L722.4,233" fill="none" stroke="#333" stroke-width="0.9" />
<path d="M640,260 L662,260" fill="none" stroke="#333" stroke-width="0.9" />
<path d="M571.5,250.7 L591.8,250.7 L607.2,259.4" fill="none" stroke="#333" stroke-width="0.9" />
<path d="M760.4,243.6 L760.4,265.8" fill="none" stroke="#333" stroke-width="0.9" />
<path d="M775.2,207.7 L799,221.4" fill="none" stroke="#333" stroke-width="0.9" />
<path d="M577,235.5 L598,235.5" fill="none" stroke="#333" stroke-width="0.9" />
<path d="M564.8,246 L564.8,274.8" fill="none" stroke="#333" stroke-width="0.9" />
<path d="M472.5,263.2 L511.3,263.2" fill="none" stroke="#333" stroke-width="0.9" />
<path d="M528.7,263.2 L543.8,263.2 L560,254.5" fill="none" stroke="#333" stroke-width="0.9" />
<path d="M472,263.2 L472,311.7" fill="none" stroke="#333" stroke-width="0.9" />
<path d="M459.8,318 L476.7,318" fill="none" stroke="#333" stroke-width="0.9" />
<path d="M472,327 L472,363 L482.5,370 L527.5,395.2 L567.3,395.2" fill="none" stroke="#333" stroke-width="0.9" />
<path d="M520.8,257.7 L520.8,290" fill="none" stroke="#333" stroke-width="0.9" />
<path d="M658.7,316.6 L658.7,336.4" fill="none" stroke="#333" stroke-width="0.9" />
<path d="M611.7,246.6 L630.2,255.9" fill="none" stroke="#333" stroke-width="0.9" />
<path d="M611.7,246.6 L611.7,312.7" fill="none" stroke="#333" stroke-width="0.9" />
<path d="M615.7,265.1 L687,304.7 L687,365.5 L630,365.5 L584.5,392.7" fill="none" stroke="#333" stroke-width="0.9" />
<path d="M687,335.1 L708,335.1" fill="none" stroke="#333" stroke-width="0.9" />
<path d="M631.5,381 L654,381" fill="none" stroke="#333" stroke-width="0.9" />
<path d="M650,404 L650,425" fill="none" stroke="#333" stroke-width="0.9" />
<path d="M654.5,430.9 L663.6,436.4" fill="none" stroke="#333" stroke-width="0.9" />
<path d="M679,414 L679,440" fill="none" stroke="#333" stroke-width="0.9" />
<path d="M736.7,405 L736.7,427" fill="none" stroke="#333" stroke-width="0.9" />
<path d="M574,437 L596,437" fill="none" stroke="#333" stroke-width="0.9" />
<path d="M477,470 L500,470" fill="none" stroke="#333" stroke-width="0.9" />
<path d="M474,506.2 L496.8,506.2" fill="none" stroke="#333" stroke-width="0.9" />
<path d="M486.9,528.3 L486.9,552.7" fill="none" stroke="#333" stroke-width="0.9" />
<path d="M493.5,521.7 L502,516.4" fill="none" stroke="#333" stroke-width="0.9" />
<path d="M513,579.8 L536,579.8" fill="none" stroke="#333" stroke-width="0.9" />
<path d="M574,566 L596,566" fill="none" stroke="#333" stroke-width="0.9" />
<path d="M579,585 L601,585" fill="none" stroke="#333" stroke-width="0.9" />
<path d="M671.4,504.2 L671.4,527" fill="none" stroke="#333" stroke-width="0.9" />
<path d="M739.2,529.3 L739.2,553" fill="none" stroke="#333" stroke-width="0.9" />
<path d="M717.8,544.4 L717.8,568" fill="none" stroke="#333" stroke-width="0.9" />
<path d="M793.2,508 L793.2,530.6" fill="none" stroke="#333" stroke-width="0.9" />
<path d="M740.4,455 L740.4,476.6" fill="none" stroke="#333" stroke-width="0.9" />
<path d="M776.8,467 L776.8,485.4" fill="none" stroke="#333" stroke-width="0.9" />
<path d="M565.5,389.1 L656.4,440.9" fill="none" stroke="#333" stroke-width="0.9" />
<path d="M563.6,363.6 L563.6,389.1" fill="none" stroke="#333" stroke-width="0.9" />
<path d="M540,393 L540,460" fill="none" stroke="#333" stroke-width="0.9" />
<path d="M503,113 L503,126" fill="none" stroke="#222" stroke-width="1.1" />
<path d="M501.1,106.8 L501.1,113.0 L504.9,113.0 L504.9,106.8Z" fill="#fff" stroke="#1a1a1a" stroke-width="0.9"/>
<g transform="rotate(90.0 503 106.8)"><rect x="500.9" y="104.0" width="4.2" height="5.6" rx="1.2" fill="#fff" stroke="#1a1a1a" stroke-width="1.1"/><line x1="500.9" y1="106.8" x2="505.1" y2="106.8" stroke="#1a1a1a" stroke-width="0.6"/></g>
<path d="M603.9,119.2 L619.8,128.4 L621.8,125.2 L605.9,116.0Z" fill="#fff" stroke="#1a1a1a" stroke-width="0.9"/>
<line x1="619.3" y1="128.1" x2="621.2" y2="124.8" stroke="#1a1a1a" stroke-width="0.6"/>
<line x1="618.2" y1="127.5" x2="620.1" y2="124.2" stroke="#1a1a1a" stroke-width="0.6"/>
<line x1="617.0" y1="126.8" x2="618.9" y2="123.5" stroke="#1a1a1a" stroke-width="0.6"/>
<line x1="615.9" y1="126.2" x2="617.8" y2="122.9" stroke="#1a1a1a" stroke-width="0.6"/>
<line x1="614.8" y1="125.5" x2="616.7" y2="122.2" stroke="#1a1a1a" stroke-width="0.6"/>
<line x1="613.7" y1="124.9" x2="615.6" y2="121.6" stroke="#1a1a1a" stroke-width="0.6"/>
<g transform="rotate(30.1 604.9 117.6)"><rect x="602.4" y="114.2" width="5.1" height="6.8" rx="1.2" fill="#fff" stroke="#1a1a1a" stroke-width="1.1"/><line x1="602.4" y1="117.6" x2="607.4" y2="117.6" stroke="#1a1a1a" stroke-width="0.6"/></g>
<path d="M696.8,106.8 L716.7,117.9 L718.5,114.5 L698.6,103.4Z" fill="#fff" stroke="#1a1a1a" stroke-width="0.9"/>
<line x1="716.1" y1="117.5" x2="718.0" y2="114.2" stroke="#1a1a1a" stroke-width="0.6"/>
<line x1="715.0" y1="116.9" x2="716.8" y2="113.6" stroke="#1a1a1a" stroke-width="0.6"/>
<line x1="713.8" y1="116.3" x2="715.7" y2="113.0" stroke="#1a1a1a" stroke-width="0.6"/>
<line x1="712.7" y1="115.6" x2="714.6" y2="112.3" stroke="#1a1a1a" stroke-width="0.6"/>
<line x1="711.6" y1="115.0" x2="713.4" y2="111.7" stroke="#1a1a1a" stroke-width="0.6"/>
<line x1="710.4" y1="114.4" x2="712.3" y2="111.1" stroke="#1a1a1a" stroke-width="0.6"/>
<line x1="709.3" y1="113.7" x2="711.1" y2="110.4" stroke="#1a1a1a" stroke-width="0.6"/>
<g transform="rotate(29.2 697.7 105.1)"><rect x="695.2" y="101.7" width="5.1" height="6.8" rx="1.2" fill="#fff" stroke="#1a1a1a" stroke-width="1.1"/><line x1="695.2" y1="105.1" x2="700.2" y2="105.1" stroke="#1a1a1a" stroke-width="0.6"/></g>
<path d="M643.0,196.1 L670.2,211.5 L672.0,208.1 L644.8,192.7Z" fill="#fff" stroke="#1a1a1a" stroke-width="0.9"/>
<line x1="669.6" y1="211.1" x2="671.5" y2="207.8" stroke="#1a1a1a" stroke-width="0.6"/>
<line x1="668.5" y1="210.5" x2="670.3" y2="207.2" stroke="#1a1a1a" stroke-width="0.6"/>
<line x1="667.3" y1="209.9" x2="669.2" y2="206.5" stroke="#1a1a1a" stroke-width="0.6"/>
<line x1="666.2" y1="209.2" x2="668.1" y2="205.9" stroke="#1a1a1a" stroke-width="0.6"/>
<line x1="665.1" y1="208.6" x2="666.9" y2="205.3" stroke="#1a1a1a" stroke-width="0.6"/>
<line x1="663.9" y1="207.9" x2="665.8" y2="204.6" stroke="#1a1a1a" stroke-width="0.6"/>
<line x1="662.8" y1="207.3" x2="664.7" y2="204.0" stroke="#1a1a1a" stroke-width="0.6"/>
<line x1="661.7" y1="206.6" x2="663.6" y2="203.3" stroke="#1a1a1a" stroke-width="0.6"/>
<line x1="660.5" y1="206.0" x2="662.4" y2="202.7" stroke="#1a1a1a" stroke-width="0.6"/>
<line x1="659.4" y1="205.4" x2="661.3" y2="202.1" stroke="#1a1a1a" stroke-width="0.6"/>
<g transform="rotate(29.5 643.9 194.4)"><rect x="641.4" y="191.0" width="5.1" height="6.8" rx="1.2" fill="#fff" stroke="#1a1a1a" stroke-width="1.1"/><line x1="641.4" y1="194.4" x2="646.4" y2="194.4" stroke="#1a1a1a" stroke-width="0.6"/></g>
<path d="M738.1,428.5 L718.3,418.0 L716.5,421.4 L736.3,431.9Z" fill="#fff" stroke="#1a1a1a" stroke-width="0.9"/>
<line x1="718.9" y1="418.3" x2="717.1" y2="421.7" stroke="#1a1a1a" stroke-width="0.6"/>
<line x1="720.0" y1="418.9" x2="718.2" y2="422.3" stroke="#1a1a1a" stroke-width="0.6"/>
<line x1="721.2" y1="419.5" x2="719.4" y2="422.9" stroke="#1a1a1a" stroke-width="0.6"/>
<line x1="722.3" y1="420.2" x2="720.5" y2="423.5" stroke="#1a1a1a" stroke-width="0.6"/>
<line x1="723.5" y1="420.8" x2="721.7" y2="424.1" stroke="#1a1a1a" stroke-width="0.6"/>
<line x1="724.6" y1="421.4" x2="722.8" y2="424.7" stroke="#1a1a1a" stroke-width="0.6"/>
<line x1="725.8" y1="422.0" x2="724.0" y2="425.3" stroke="#1a1a1a" stroke-width="0.6"/>
<g transform="rotate(-152.1 737.2 430.2)"><rect x="734.7" y="426.8" width="5.1" height="6.8" rx="1.2" fill="#fff" stroke="#1a1a1a" stroke-width="1.1"/><line x1="734.7" y1="430.2" x2="739.8" y2="430.2" stroke="#1a1a1a" stroke-width="0.6"/></g>
<path d="M541.5,581.5 L541.5,557.9 L537.7,557.9 L537.7,581.5Z" fill="#fff" stroke="#1a1a1a" stroke-width="0.9"/>
<line x1="541.5" y1="558.5" x2="537.7" y2="558.5" stroke="#1a1a1a" stroke-width="0.6"/>
<line x1="541.5" y1="559.9" x2="537.7" y2="559.9" stroke="#1a1a1a" stroke-width="0.6"/>
<line x1="541.5" y1="561.1" x2="537.7" y2="561.1" stroke="#1a1a1a" stroke-width="0.6"/>
<line x1="541.5" y1="562.4" x2="537.7" y2="562.4" stroke="#1a1a1a" stroke-width="0.6"/>
<line x1="541.5" y1="563.8" x2="537.7" y2="563.8" stroke="#1a1a1a" stroke-width="0.6"/>
<line x1="541.5" y1="565.0" x2="537.7" y2="565.0" stroke="#1a1a1a" stroke-width="0.6"/>
<line x1="541.5" y1="566.4" x2="537.7" y2="566.4" stroke="#1a1a1a" stroke-width="0.6"/>
<line x1="541.5" y1="567.6" x2="537.7" y2="567.6" stroke="#1a1a1a" stroke-width="0.6"/>
<g transform="rotate(-90.0 539.6 581.5)"><rect x="537.6" y="578.9" width="3.9" height="5.2" rx="1.2" fill="#fff" stroke="#1a1a1a" stroke-width="1.1"/><line x1="537.6" y1="581.5" x2="541.6" y2="581.5" stroke="#1a1a1a" stroke-width="0.6"/></g>
<path d="M721.3,540.3 L693.7,522.7 L691.7,525.9 L719.3,543.5Z" fill="#fff" stroke="#1a1a1a" stroke-width="0.9"/>
<line x1="694.3" y1="523.0" x2="692.2" y2="526.3" stroke="#1a1a1a" stroke-width="0.6"/>
<line x1="695.4" y1="523.7" x2="693.3" y2="527.0" stroke="#1a1a1a" stroke-width="0.6"/>
<line x1="696.5" y1="524.4" x2="694.4" y2="527.6" stroke="#1a1a1a" stroke-width="0.6"/>
<line x1="697.6" y1="525.1" x2="695.5" y2="528.3" stroke="#1a1a1a" stroke-width="0.6"/>
<line x1="698.7" y1="525.8" x2="696.6" y2="529.0" stroke="#1a1a1a" stroke-width="0.6"/>
<line x1="699.8" y1="526.5" x2="697.7" y2="529.7" stroke="#1a1a1a" stroke-width="0.6"/>
<line x1="700.8" y1="527.2" x2="698.8" y2="530.4" stroke="#1a1a1a" stroke-width="0.6"/>
<line x1="701.9" y1="527.9" x2="699.9" y2="531.1" stroke="#1a1a1a" stroke-width="0.6"/>
<line x1="703.0" y1="528.6" x2="701.0" y2="531.8" stroke="#1a1a1a" stroke-width="0.6"/>
<line x1="704.1" y1="529.3" x2="702.1" y2="532.5" stroke="#1a1a1a" stroke-width="0.6"/>
<line x1="705.2" y1="530.0" x2="703.2" y2="533.2" stroke="#1a1a1a" stroke-width="0.6"/>
<g transform="rotate(-147.5 720.3 541.9)"><rect x="717.8" y="538.5" width="5.1" height="6.8" rx="1.2" fill="#fff" stroke="#1a1a1a" stroke-width="1.1"/><line x1="717.8" y1="541.9" x2="722.8" y2="541.9" stroke="#1a1a1a" stroke-width="0.6"/></g>
<path d="M799.2,534.0 L784.1,525.2 L782.1,528.4 L797.2,537.2Z" fill="#fff" stroke="#1a1a1a" stroke-width="0.9"/>
<line x1="784.6" y1="525.5" x2="782.7" y2="528.8" stroke="#1a1a1a" stroke-width="0.6"/>
<line x1="785.7" y1="526.1" x2="783.8" y2="529.4" stroke="#1a1a1a" stroke-width="0.6"/>
<line x1="786.9" y1="526.8" x2="785.0" y2="530.1" stroke="#1a1a1a" stroke-width="0.6"/>
<line x1="788.0" y1="527.4" x2="786.1" y2="530.7" stroke="#1a1a1a" stroke-width="0.6"/>
<line x1="789.1" y1="528.1" x2="787.2" y2="531.4" stroke="#1a1a1a" stroke-width="0.6"/>
<line x1="790.2" y1="528.8" x2="788.3" y2="532.0" stroke="#1a1a1a" stroke-width="0.6"/>
<g transform="rotate(-149.8 798.2 535.6)"><rect x="795.7" y="532.2" width="5.1" height="6.8" rx="1.2" fill="#fff" stroke="#1a1a1a" stroke-width="1.1"/><line x1="795.7" y1="535.6" x2="800.8" y2="535.6" stroke="#1a1a1a" stroke-width="0.6"/></g>
<circle cx="685" cy="148.1" r="3.4" fill="#fff" stroke="#1a1a1a" stroke-width="1.1"/>
<circle cx="685.6" cy="148.5" r="1.53" fill="none" stroke="#1a1a1a" stroke-width="0.6"/>
<circle cx="636" cy="259.8" r="2.8" fill="#fff" stroke="#1a1a1a" stroke-width="1.1"/>
<circle cx="636.6" cy="260.2" r="1.26" fill="none" stroke="#1a1a1a" stroke-width="0.6"/>
<circle cx="739.2" cy="480.3" r="3.3" fill="#fff" stroke="#1a1a1a" stroke-width="1.1"/>
<circle cx="739.8000000000001" cy="480.7" r="1.4849999999999999" fill="none" stroke="#1a1a1a" stroke-width="0.6"/>
<circle cx="671.1" cy="174.5" r="2.5" fill="#fff" stroke="#1a1a1a" stroke-width="1.1"/>
<circle cx="671.7" cy="174.9" r="1.125" fill="none" stroke="#1a1a1a" stroke-width="0.6"/>
<g transform="rotate(-20 792.7 173)"><path d="M790.1,171.0 L790.1,175.0 A2.6,1.3 0 0 0 795.3000000000001,175.0 L795.3000000000001,171.0" fill="#fff" stroke="#1a1a1a" stroke-width="1"/><ellipse cx="792.7" cy="171.0" rx="2.6" ry="1.3" fill="#fff" stroke="#1a1a1a" stroke-width="1"/></g>
<g transform="rotate(-20 650.9 429.1)"><path d="M648.3,427.1 L648.3,431.1 A2.6,1.3 0 0 0 653.5,431.1 L653.5,427.1" fill="#fff" stroke="#1a1a1a" stroke-width="1"/><ellipse cx="650.9" cy="427.1" rx="2.6" ry="1.3" fill="#fff" stroke="#1a1a1a" stroke-width="1"/></g>
<g><path d="M499.6,467.0 L499.6,473.0 A2.9,1.45 0 0 0 505.4,473.0 L505.4,467.0" fill="#fff" stroke="#1a1a1a" stroke-width="1"/><ellipse cx="502.5" cy="467.0" rx="2.9" ry="1.45" fill="#fff" stroke="#1a1a1a" stroke-width="1"/></g>
<ellipse cx="563.9" cy="437.3" rx="8" ry="4.5" fill="none" stroke="#1a1a1a" stroke-width="1.56"/>
<ellipse cx="564.3" cy="565.8" rx="8.5" ry="4.5" fill="none" stroke="#1a1a1a" stroke-width="1.56"/>
<path d="M500.3,127.3 L528.3,111.3 L557.4,128.5 L530.1,143.4 Q510,140 500.3,127.3Z" fill="#fff" stroke="#1a1a1a" stroke-width="1.32" />
<path d="M501,129.8 Q511,141 529.5,145.4" fill="none" stroke="#1a1a1a" stroke-width="1.20" />
<path d="M511.6,132.1 Q515,127 520,126.7 L531.8,129.1 Q535,130.5 536.6,134.5 Q535,137.5 531.8,138 L515.2,135.7 Q511,134.5 511.6,132.1Z" fill="none" stroke="#1a1a1a" stroke-width="1.08" />
<path d="M530,124.5 A6.5,4.5 0 1 1 541.5,125" fill="none" stroke="#1a1a1a" stroke-width="1.20" />
<path d="M531.3,123.8 A4.8,3.2 0 1 1 540,124.3" fill="none" stroke="#1a1a1a" stroke-width="0.72" />
<ellipse cx="528.3" cy="113.8" rx="1.3" ry="0.9" fill="#333" stroke="#1a1a1a" stroke-width="0.96"/>
<ellipse cx="554.2" cy="128.3" rx="1.3" ry="0.9" fill="#333" stroke="#1a1a1a" stroke-width="0.96"/>
<ellipse cx="530.1" cy="140.8" rx="1.3" ry="0.9" fill="#333" stroke="#1a1a1a" stroke-width="0.96"/>
<ellipse cx="503.2" cy="127.5" rx="1.3" ry="0.9" fill="#333" stroke="#1a1a1a" stroke-width="0.96"/>
<path d="M500.3,166.6 L527.7,152.3 L556.8,167.7 L529.5,182 Z" fill="#fff" stroke="#1a1a1a" stroke-width="1.92" />
<path d="M503.5,166.6 L527.7,154.3 L553.5,167.7 L529.5,179.8 Z" fill="none" stroke="#1a1a1a" stroke-width="0.84" />
<path d="M519.5,158.5 L528.5,163 Q533,170 542,167 L553,172" fill="none" stroke="#1a1a1a" stroke-width="1.08" />
<path d="M523,157 L530,160.5" fill="none" stroke="#1a1a1a" stroke-width="0.96" />
<ellipse cx="535.4" cy="161.8" rx="6.5" ry="4.3" fill="none" stroke="#1a1a1a" stroke-width="1.08"/>
<path d="M537,166 L547,170.5" fill="none" stroke="#1a1a1a" stroke-width="0.96" />
<path d="M510.5,171.3 Q513,166.5 518.8,166.6 L530,169.5 Q537,171.5 537.2,174.5 Q536,178.8 530.7,178.5 L514,175.5 Q510,174 510.5,171.3Z" fill="none" stroke="#1a1a1a" stroke-width="1.08" />
<ellipse cx="527.7" cy="154.8" rx="1.4" ry="1" fill="none" stroke="#1a1a1a" stroke-width="0.96"/>
<ellipse cx="553.8" cy="167.7" rx="1.4" ry="1" fill="none" stroke="#1a1a1a" stroke-width="0.96"/>
<ellipse cx="529.5" cy="179.8" rx="1.4" ry="1" fill="none" stroke="#1a1a1a" stroke-width="0.96"/>
<ellipse cx="503.5" cy="166.8" rx="1.4" ry="1" fill="none" stroke="#1a1a1a" stroke-width="0.96"/>
<path d="M506.2,194.3 L506.2,223.6 L523.2,233.1 L535.1,226 L535.1,195" fill="#fff" stroke="#1a1a1a" stroke-width="1.32" />
<path d="M506.2,194.3 L517.7,186.3 L535.1,195 L523.2,202.2 Z" fill="none" stroke="#1a1a1a" stroke-width="1.32" />
<path d="M523.2,202.2 L523.2,233.1" fill="none" stroke="#1a1a1a" stroke-width="1.20" />
<g fill="#888"><rect x="513.8" y="215.0" width="0.8" height="0.8"/><rect x="517.3" y="217.1" width="0.8" height="0.8"/><rect x="514.4" y="204.2" width="0.8" height="0.8"/><rect x="533.9" y="212.5" width="0.8" height="0.8"/><rect x="529.7" y="212.7" width="0.8" height="0.8"/><rect x="524.4" y="201.3" width="0.8" height="0.8"/><rect x="524.3" y="226.4" width="0.8" height="0.8"/><rect x="521.4" y="221.9" width="0.8" height="0.8"/><rect x="527.6" y="216.7" width="0.8" height="0.8"/><rect x="530.4" y="212.5" width="0.8" height="0.8"/><rect x="526.5" y="226.8" width="0.8" height="0.8"/><rect x="526.4" y="228.2" width="0.8" height="0.8"/><rect x="518.0" y="224.0" width="0.8" height="0.8"/><rect x="519.3" y="228.7" width="0.8" height="0.8"/><rect x="530.8" y="199.4" width="0.8" height="0.8"/><rect x="511.1" y="203.6" width="0.8" height="0.8"/><rect x="533.1" y="211.3" width="0.8" height="0.8"/><rect x="524.1" y="206.5" width="0.8" height="0.8"/><rect x="520.9" y="209.5" width="0.8" height="0.8"/><rect x="516.8" y="216.5" width="0.8" height="0.8"/><rect x="523.0" y="227.6" width="0.8" height="0.8"/><rect x="525.6" y="228.5" width="0.8" height="0.8"/><rect x="525.3" y="201.7" width="0.8" height="0.8"/><rect x="531.5" y="215.9" width="0.8" height="0.8"/><rect x="526.4" y="203.4" width="0.8" height="0.8"/><rect x="529.5" y="216.1" width="0.8" height="0.8"/><rect x="509.8" y="224.0" width="0.8" height="0.8"/><rect x="518.4" y="201.3" width="0.8" height="0.8"/><rect x="515.3" y="222.9" width="0.8" height="0.8"/><rect x="530.6" y="197.5" width="0.8" height="0.8"/><rect x="526.5" y="207.6" width="0.8" height="0.8"/><rect x="520.9" y="230.9" width="0.8" height="0.8"/><rect x="512.7" y="210.3" width="0.8" height="0.8"/><rect x="531.3" y="209.2" width="0.8" height="0.8"/><rect x="519.7" y="214.2" width="0.8" height="0.8"/><rect x="524.6" y="216.8" width="0.8" height="0.8"/><rect x="522.3" y="217.7" width="0.8" height="0.8"/><rect x="532.4" y="213.7" width="0.8" height="0.8"/><rect x="518.9" y="221.2" width="0.8" height="0.8"/><rect x="513.8" y="206.5" width="0.8" height="0.8"/><rect x="533.4" y="214.2" width="0.8" height="0.8"/><rect x="518.5" y="216.3" width="0.8" height="0.8"/><rect x="508.0" y="217.6" width="0.8" height="0.8"/><rect x="524.1" y="212.3" width="0.8" height="0.8"/><rect x="525.5" y="208.3" width="0.8" height="0.8"/><rect x="526.2" y="221.8" width="0.8" height="0.8"/><rect x="508.1" y="198.1" width="0.8" height="0.8"/><rect x="525.4" y="229.7" width="0.8" height="0.8"/><rect x="514.2" y="212.0" width="0.8" height="0.8"/><rect x="523.2" y="207.2" width="0.8" height="0.8"/><rect x="517.1" y="206.9" width="0.8" height="0.8"/><rect x="517.3" y="216.8" width="0.8" height="0.8"/><rect x="515.5" y="209.2" width="0.8" height="0.8"/></g>
<path d="M508.6,246.8 Q512,243 516.3,241 L526,242 Q528.5,246 528,250.6 L522,253.5 Q515,251 508.6,246.8Z" fill="#fff" stroke="#1a1a1a" stroke-width="1.32" />
<path d="M510,248.5 Q516,252 522,254.5" fill="none" stroke="#1a1a1a" stroke-width="0.96" />
<ellipse cx="521" cy="247" rx="1.6" ry="1.2" fill="#333" stroke="#1a1a1a" stroke-width="0.96"/>
<path d="M484.8,288 L484.8,358" fill="none" stroke="#1a1a1a" stroke-width="0.9" />
<path d="M486.8,288 L486.8,358" fill="none" stroke="#1a1a1a" stroke-width="0.9" />
<path d="M484.8,358 L486.8,358" fill="none" stroke="#1a1a1a" stroke-width="1.08" />
<path d="M490.7,282.7 L490.7,300" fill="none" stroke="#1a1a1a" stroke-width="1.1" />
<path d="M490.7,316 L490.7,358" fill="none" stroke="#1a1a1a" stroke-width="1.1" />
<path d="M495.5,282.7 L495.5,300" fill="none" stroke="#1a1a1a" stroke-width="1.1" />
<path d="M495.5,316 L495.5,358" fill="none" stroke="#1a1a1a" stroke-width="1.1" />
<path d="M487.5,300 L499,300 L499,316 L487.5,316 Z" fill="#fff" stroke="#1a1a1a" stroke-width="1.08" />
<path d="M489,303 L497,303 L497,313 L489,313 Z" fill="none" stroke="#1a1a1a" stroke-width="0.84" />
<ellipse cx="492.5" cy="291" rx="1.6" ry="2.6" fill="none" stroke="#1a1a1a" stroke-width="0.96"/>
<path d="M499.6,275.5 L499.6,293 L504.4,293 L504.4,275.5" fill="#fff" stroke="#1a1a1a" stroke-width="1.08" />
<ellipse cx="502" cy="275.2" rx="2.4" ry="1.6" fill="#fff" stroke="#1a1a1a" stroke-width="1.08"/>
<path d="M504,281 L552,283.5 L553,290 L504,292 Z" fill="#fff" stroke="#1a1a1a" stroke-width="1.08" />
<path d="M507,283 L507,291" fill="none" stroke="#1a1a1a" stroke-width="0.72" />
<path d="M511,283 L511,291" fill="none" stroke="#1a1a1a" stroke-width="0.72" />
<path d="M515,283 L515,291" fill="none" stroke="#1a1a1a" stroke-width="0.72" />
<path d="M519,283 L519,291" fill="none" stroke="#1a1a1a" stroke-width="0.72" />
<path d="M506,286.5 L521,286.5" fill="none" stroke="#1a1a1a" stroke-width="0.72" />
<rect x="505.5" y="286" width="12" height="4.5" fill="#333"/>
<path d="M521,282 L521,291 M530,282.5 L530,291.5" fill="none" stroke="#1a1a1a" stroke-width="0.72" />
<path d="M530,287 L553,287" fill="none" stroke="#1a1a1a" stroke-width="0.84" />
<path d="M540,283 Q546,276 553.7,266.6 Q556,263 560,265" fill="none" stroke="#1a1a1a" stroke-width="1.08" />
<path d="M550,282 Q557,272 566,268" fill="none" stroke="#1a1a1a" stroke-width="0.96" />
<path d="M499.6,314.8 L532.3,297 L557.3,308.3" fill="none" stroke="#1a1a1a" stroke-width="1.32" />
<path d="M503,316 L533,300 L553,309" fill="none" stroke="#1a1a1a" stroke-width="0.84" />
<path d="M510,312 L510,305 M514,306 Q525,298 538,303" fill="none" stroke="#1a1a1a" stroke-width="0.84" />
<path d="M520,314 Q530,305 540,310 Q548,314 552,322 Q548,328 540,325" fill="none" stroke="#1a1a1a" stroke-width="0.96" />
<path d="M530,320 Q536,316 543,318" fill="none" stroke="#1a1a1a" stroke-width="0.84" />
<ellipse cx="527" cy="306" rx="2.8" ry="1.8" fill="none" stroke="#1a1a1a" stroke-width="0.96"/>
<ellipse cx="548" cy="296" rx="3" ry="2" fill="none" stroke="#1a1a1a" stroke-width="0.96"/>
<path d="M537,296 L545,292 L556,297 L548,301 Z" fill="none" stroke="#1a1a1a" stroke-width="0.84" />
<path d="M499.6,315.5 L499.6,363.4 Q510,372 526.3,376.6" fill="none" stroke="#1a1a1a" stroke-width="1.32" />
<path d="M499.6,333 Q511,345 527,350.2" fill="none" stroke="#1a1a1a" stroke-width="1.08" />
<path d="M500,317.5 Q505,320 510,316" fill="none" stroke="#1a1a1a" stroke-width="0.84" />
<clipPath id="finclip"><path d="M553,275 L578,262 L623.5,279 L580,300.4Z"/></clipPath>
<path clip-path="url(#finclip)" d="M532.5,245.7 L623.5,279.7 M532.7,248.2 L623.7,282.2 M532.8,250.7 L623.8,284.7 M532.9,253.2 L623.9,287.2 M533.1,255.7 L624.1,289.7 M533.2,258.1 L624.2,292.1 M533.3,260.6 L624.3,294.6 M533.4,263.1 L624.4,297.1 M533.6,265.6 L624.6,299.6 M533.7,268.0 L624.7,302.0 M533.8,270.5 L624.8,304.5 M534.0,273.0 L625.0,307.0 M534.1,275.5 L625.1,309.5 M534.2,277.9 L625.2,311.9 M534.3,280.4 L625.3,314.4 M534.5,282.9 L625.5,316.9" fill="none" stroke="#1a1a1a" stroke-width="0.75"/>
<path d="M553,275 L578,262 L623.5,279 L580,300.4" fill="none" stroke="#1a1a1a" stroke-width="1.20" />
<path d="M580,300.4 L580,304 L623.5,282.5 L623.5,279" fill="none" stroke="#1a1a1a" stroke-width="1.08" />
<ellipse cx="582.0" cy="262.4" rx="2.2" ry="1.3" transform="rotate(30 582.0 262.4)" fill="#fff" stroke="#1a1a1a" stroke-width="0.8"/>
<ellipse cx="588.5" cy="264.8" rx="2.2" ry="1.3" transform="rotate(30 588.5 264.8)" fill="#fff" stroke="#1a1a1a" stroke-width="0.8"/>
<ellipse cx="595.0" cy="267.3" rx="2.2" ry="1.3" transform="rotate(30 595.0 267.3)" fill="#fff" stroke="#1a1a1a" stroke-width="0.8"/>
<ellipse cx="601.5" cy="269.7" rx="2.2" ry="1.3" transform="rotate(30 601.5 269.7)" fill="#fff" stroke="#1a1a1a" stroke-width="0.8"/>
<ellipse cx="608.0" cy="272.1" rx="2.2" ry="1.3" transform="rotate(30 608.0 272.1)" fill="#fff" stroke="#1a1a1a" stroke-width="0.8"/>
<ellipse cx="614.5" cy="274.6" rx="2.2" ry="1.3" transform="rotate(30 614.5 274.6)" fill="#fff" stroke="#1a1a1a" stroke-width="0.8"/>
<ellipse cx="621.0" cy="277.0" rx="2.2" ry="1.3" transform="rotate(30 621.0 277.0)" fill="#fff" stroke="#1a1a1a" stroke-width="0.8"/>
<ellipse cx="587" cy="277" rx="3.5" ry="2.5" fill="#fff" stroke="#1a1a1a" stroke-width="1.08"/>
<ellipse cx="587" cy="277" rx="1.6" ry="1.1" fill="none" stroke="#1a1a1a" stroke-width="0.84"/>
<path d="M580,285 Q579,290 581,292 Q585,293 585,288 Q584,283 580,285Z" fill="none" stroke="#1a1a1a" stroke-width="0.96" />
<path d="M551,283 L551,295 Q563,303 576,295 L576,283" fill="#fff" stroke="#1a1a1a" stroke-width="1.32" />
<ellipse cx="563.5" cy="283" rx="12.5" ry="7.5" fill="#fff" stroke="#1a1a1a" stroke-width="1.32"/>
<ellipse cx="563.5" cy="284" rx="8" ry="4" fill="none" stroke="#1a1a1a" stroke-width="1.08"/>
<path d="M553,273 Q554,265 558,265 Q561,267 561,274" fill="none" stroke="#1a1a1a" stroke-width="1.08" />
<path d="M557,294 L557,318 Q560,328 572,326 L580,321 L580,300" fill="none" stroke="#1a1a1a" stroke-width="1.20" />
<path d="M561,297 L561,317 Q563,322 570,321 L575,318 L575,298" fill="none" stroke="#1a1a1a" stroke-width="0.96" />
<path d="M562,303 L574,303.5" fill="none" stroke="#1a1a1a" stroke-width="0.60" />
<path d="M562,307 L574,307.5" fill="none" stroke="#1a1a1a" stroke-width="0.60" />
<path d="M562,311 L574,311.5" fill="none" stroke="#1a1a1a" stroke-width="0.60" />
<path d="M562,315 L574,315.5" fill="none" stroke="#1a1a1a" stroke-width="0.60" />
<path d="M557,318 L552,318 L552,325 L557,327" fill="none" stroke="#1a1a1a" stroke-width="0.96" />
<path d="M580,321 L584,318 L584,327 L579,330" fill="none" stroke="#1a1a1a" stroke-width="0.96" />
<path d="M623.5,282.5 L625.5,283 L625.5,336" fill="none" stroke="#1a1a1a" stroke-width="1.20" />
<path d="M617.2,286 L617.2,336" fill="none" stroke="#1a1a1a" stroke-width="0.96" />
<path d="M619.5,290 L621,325" fill="none" stroke="#1a1a1a" stroke-width="0.72" />
<path d="M619,310.9 L631.5,311.8 L631.5,328.5 L616.3,340.5" fill="#fff" stroke="#1a1a1a" stroke-width="1.08" />
<path d="M622,313 L629,313.5 L629,325 L622,330Z" fill="none" stroke="#1a1a1a" stroke-width="0.72" />
<path d="M588.0,304.0 Q596.0,294.0 602.0,303 L604.0,326" fill="none" stroke="#1a1a1a" stroke-width="1.02" />
<path d="M591.2,304.5 Q599.2,295.5 605.2,304 L607.2,325" fill="none" stroke="#1a1a1a" stroke-width="1.02" />
<path d="M594.4,305.0 Q602.4,297.0 608.4,305 L610.4,324" fill="none" stroke="#1a1a1a" stroke-width="1.02" />
<path d="M597.6,305.5 Q605.6,298.5 611.6,306 L613.6,323" fill="none" stroke="#1a1a1a" stroke-width="1.02" />
<ellipse cx="597" cy="294" rx="3" ry="2" fill="#fff" stroke="#1a1a1a" stroke-width="1.08"/>
<ellipse cx="597" cy="294" rx="1.4" ry="0.9" fill="none" stroke="#1a1a1a" stroke-width="0.72"/>
<path d="M590,297 Q586,294 588,291 Q592,289 594,292" fill="none" stroke="#1a1a1a" stroke-width="0.84" />
<path d="M584,326 Q586,308 594,309 Q600,312 600,326" fill="none" stroke="#1a1a1a" stroke-width="0.96" />
<circle cx="603.5" cy="337" r="10.2" fill="#fff" stroke="#1a1a1a" stroke-width="1.20"/>
<circle cx="603.5" cy="337" r="7.5" fill="none" stroke="#1a1a1a" stroke-width="0.72"/>
<circle cx="603.5" cy="337" r="4.5" fill="none" stroke="#1a1a1a" stroke-width="1.08"/>
<circle cx="603.5" cy="337" r="2" fill="none" stroke="#1a1a1a" stroke-width="0.84"/>
<path d="M593.8,362 L631,343.6 L631,333.2" fill="none" stroke="#1a1a1a" stroke-width="1.08" />
<path d="M593.8,355 L615,345" fill="none" stroke="#1a1a1a" stroke-width="0.72" />
<path d="M598,322 Q590,328 592,340" fill="none" stroke="#1a1a1a" stroke-width="0.84" />
<path d="M551.0,328.0 Q575,330.0 593.8,337.0" fill="none" stroke="#1a1a1a" stroke-width="0.96" />
<path d="M550.7,330.6 Q575,332.6 593.8,339.2" fill="none" stroke="#1a1a1a" stroke-width="0.96" />
<path d="M550.4,333.2 Q575,335.2 593.8,341.4" fill="none" stroke="#1a1a1a" stroke-width="0.96" />
<path d="M550.1,335.8 Q575,337.8 593.8,343.6" fill="none" stroke="#1a1a1a" stroke-width="0.96" />
<path d="M549.8,338.4 Q575,340.4 593.8,345.8" fill="none" stroke="#1a1a1a" stroke-width="0.96" />
<path d="M526.9,343.8 Q535,340 543.8,337.5 Q548,336 555,340 Q570,345 590,343.8 L593.8,346.3 L593.8,380 Q590,388 565,389.4 L548.8,389.4 Q535,387 527.5,381.3 Z" fill="#fff" stroke="#1a1a1a" stroke-width="1.32" />
<path d="M529,346 Q536,343 544,340.5 Q550,339 556,343 Q571,347 589,346 L591.5,348 L591.5,378.5 Q588,385.5 565,387 L549,387 Q537,385 529.5,379.5 Z" fill="none" stroke="#1a1a1a" stroke-width="0.72" />
<ellipse cx="564.4" cy="362.5" rx="18.75" ry="15" fill="#fff" stroke="#1a1a1a" stroke-width="1.32"/>
<ellipse cx="564.4" cy="362.5" rx="16.2" ry="12.8" fill="none" stroke="#1a1a1a" stroke-width="0.84"/>
<path d="M531,351 Q531,350 532,350 L538,350.5 Q539,351 539,352 L538.5,359.5 Q538,360 537,360 L532,360 Q531,360 531,359Z" fill="none" stroke="#1a1a1a" stroke-width="1.08" />
<path d="M531,368 Q531,367 532,367 L538,367.5 Q539,368 539,369 L538.5,375.5 Q538,376.3 537,376.3 L532,376 Q531,376 531,375Z" fill="none" stroke="#1a1a1a" stroke-width="1.08" />
<path d="M539,342.5 Q546,341 548.7,345 Q546,348 543,349 Q541,362 543,376 Q546,378 548.7,380 Q546,383.5 540,382.5 Q536,362 539,342.5Z" fill="none" stroke="#1a1a1a" stroke-width="1.08" />
<ellipse cx="575" cy="381.3" rx="1.6" ry="1.2" fill="none" stroke="#1a1a1a" stroke-width="0.96"/>
<ellipse cx="580" cy="376.3" rx="1.6" ry="1.2" fill="none" stroke="#1a1a1a" stroke-width="0.96"/>
<ellipse cx="580" cy="350" rx="1.6" ry="1.2" fill="none" stroke="#1a1a1a" stroke-width="0.96"/>
<circle cx="545.6" cy="387.5" r="2.6" fill="#fff" stroke="#1a1a1a" stroke-width="1.20"/>
<circle cx="545.6" cy="338.5" r="2.2" fill="#fff" stroke="#1a1a1a" stroke-width="1.08"/>
<path d="M552.6,233.5 L552.6,237.5 A11.4,6.8 0 0 0 575.4,237.5 L575.4,233.5" fill="#fff" stroke="#1a1a1a" stroke-width="1.20" />
<ellipse cx="564" cy="233.5" rx="11.4" ry="6.8" fill="#fff" stroke="#1a1a1a" stroke-width="1.32"/>
<ellipse cx="564" cy="233.8" rx="7.8" ry="4" fill="none" stroke="#1a1a1a" stroke-width="1.08"/>
<path d="M630.5,131 Q631,127.5 634,126.5 Q642,122 652,122.5 Q659,123 663.8,127 L664.3,131.6 L664.3,150 L646,176 Q640,178 636,176 Q631,174 630.5,169.5 Z" fill="#fff" stroke="#1a1a1a" stroke-width="1.32" />
<path d="M632.5,131 L632.5,170" fill="none" stroke="#1a1a1a" stroke-width="0.72" />
<path d="M635.2,135.3 Q636,131.5 640,130.5 L660,126 Q662.5,126.5 662.5,129 L662.5,150 M635.2,135.3 L635.2,172.3 Q636,176 640,175" fill="none" stroke="#1a1a1a" stroke-width="0.96" />
<path d="M637.0,133.5 L661,127.6" fill="none" stroke="#1a1a1a" stroke-width="0.60" />
<path d="M637.3,132.4 L661,127.3" fill="none" stroke="#1a1a1a" stroke-width="0.60" />
<path d="M637.6,131.3 L661,127.0" fill="none" stroke="#1a1a1a" stroke-width="0.60" />
<path d="M637.9,130.2 L661,126.69999999999999" fill="none" stroke="#1a1a1a" stroke-width="0.60" />
<path d="M646.3,142 Q646.5,139.5 649,139 L670.5,131.3 Q673,131 673.1,134 L673.1,162.1 Q673,165.5 668.4,167 L649,180.5 Q646.3,181.5 646.3,178.5 Z" fill="#fff" stroke="#1a1a1a" stroke-width="1.32" />
<path d="M648.2,142.5 L670.5,134.6 Q671,134.5 671,135.5 L671,144.3 Q670,146 667,147.5 L662.5,150 Q660,147.5 657.5,150.5 L648.2,157.5 Z" fill="none" stroke="#1a1a1a" stroke-width="1.08" />
<path d="M648.2,163.5 L657,157.5 Q659,160.5 661.5,157 L670.5,152.3 L670.5,161.5 Q670,163.5 667.5,164.8 L648.2,178.3 Z" fill="none" stroke="#1a1a1a" stroke-width="1.08" />
<ellipse cx="659.5" cy="149.8" rx="1.5" ry="1.5" fill="none" stroke="#1a1a1a" stroke-width="0.84"/>
<ellipse cx="659.5" cy="159" rx="1.3" ry="1.3" fill="none" stroke="#1a1a1a" stroke-width="0.84"/>
<path d="M651,172 L657,168.5 M651,175 L656,172" fill="none" stroke="#1a1a1a" stroke-width="1.44" />
<path d="M686.9,159 L688.1,201.8 L691.6,211.3 L697,220 L708.3,222 L707.1,174.5 L715.4,160.2 L707,149.5 L690,156 Z" fill="#fff" stroke="#1a1a1a" stroke-width="1.20" />
<path d="M690,157 L693,210 M697.6,168 L697.6,220 M702.3,165 L702.3,221" fill="none" stroke="#1a1a1a" stroke-width="0.96" />
<path d="M686.9,185 L684,187 L684,197 L688,199" fill="none" stroke="#1a1a1a" stroke-width="0.96" />
<ellipse cx="694.6" cy="181.6" rx="2.3" ry="1.6" fill="#fff" stroke="#1a1a1a" stroke-width="0.96"/>
<path d="M692.5,181 L692.5,190 L696.5,190 L696.5,181" fill="none" stroke="#1a1a1a" stroke-width="0.84" />
<path d="M690,156 Q700,150 707,149.5 L712,146 Q715,143 718,146 L722,150 L727,147 Q731,144 734,147 L740,149 Q745,145 748.7,147.7 L751.1,153.1" fill="#fff" stroke="#1a1a1a" stroke-width="1.20" />
<path d="M700,158 L748,150 M702,163 L749,156 M694,165 L712,160" fill="none" stroke="#1a1a1a" stroke-width="0.84" />
<path d="M705,150 Q707,144 711,146 M718,154 Q719,149 724,150" fill="none" stroke="#1a1a1a" stroke-width="0.96" />
<path d="M707.1,174.5 L715.4,160.2 Q735,156 748,153.1 Q752,153.5 752.5,157 L754.1,190 Q752,196 745,201 Q735,207 730.9,211.3 L722.6,217.3 Q716,221 708.3,222 Z" fill="#fff" stroke="#1a1a1a" stroke-width="1.32" />
<path d="M709.5,175 L717,162.5 Q736,158.5 747,156 Q750,156.5 750.3,159 L751.8,189 Q750,194.5 744,199 Q734,205 729.5,209.5 L721.5,215.5 Q716,219 710.5,219.5 Z" fill="none" stroke="#1a1a1a" stroke-width="0.72" />
<ellipse cx="734.5" cy="184" rx="12.5" ry="16.5" fill="none" stroke="#1a1a1a" stroke-width="0.96" transform="rotate(20 734.5 184)"/>
<ellipse cx="729.1" cy="189.9" rx="3.5" ry="6" fill="none" stroke="#1a1a1a" stroke-width="1.20" transform="rotate(15 729.1 189.9)"/>
<path d="M733,178 Q738,174 741,178 Q739,183 735,182" fill="none" stroke="#1a1a1a" stroke-width="0.96" />
<ellipse cx="746.3" cy="165" rx="1.5" ry="1.3" fill="none" stroke="#1a1a1a" stroke-width="0.96"/>
<ellipse cx="746.3" cy="192.3" rx="1.5" ry="1.3" fill="none" stroke="#1a1a1a" stroke-width="0.96"/>
<ellipse cx="743.4" cy="198.3" rx="1.5" ry="1.3" fill="none" stroke="#1a1a1a" stroke-width="0.96"/>
<ellipse cx="715.4" cy="195.9" rx="1.5" ry="1.3" fill="none" stroke="#1a1a1a" stroke-width="0.96"/>
<ellipse cx="722.6" cy="216.1" rx="1.5" ry="1.3" fill="none" stroke="#1a1a1a" stroke-width="0.96"/>
<ellipse cx="712" cy="168" rx="1.5" ry="1.3" fill="none" stroke="#1a1a1a" stroke-width="0.96"/>
<path d="M713,183 L715.5,183 L715.5,190 L713,190Z M713,202 L715.5,202 L715.5,211 L713,211Z" fill="none" stroke="#1a1a1a" stroke-width="0.96" />
<path d="M718,174.5 L722,173 L721.5,178 L718,179Z" fill="none" stroke="#1a1a1a" stroke-width="0.96" />
<path d="M719,201 Q723,199 724,203 L723,209 Q720,210 719,207Z" fill="none" stroke="#1a1a1a" stroke-width="0.96" />
<path d="M750,242.9 L750,201.7 L760.1,187.4 Q762.7,186 767.5,187.4 L775.9,186.9 L780.1,183.2 Q784,180.5 788.6,182.7 L789.6,212.2 L786.5,219.6 Q778,225 771.7,229.1 L765.3,237.6 L762.2,242.9 Z" fill="#fff" stroke="#1a1a1a" stroke-width="1.32" />
<path d="M752,241 L752,202.5 L761,189.5 M787.3,185 L787.6,211.5" fill="none" stroke="#1a1a1a" stroke-width="0.66" />
<ellipse cx="773.8" cy="207.5" rx="13.2" ry="18" fill="none" stroke="#1a1a1a" stroke-width="1.32" transform="rotate(25 773.8 207.5)"/>
<ellipse cx="773.8" cy="207.5" rx="12" ry="16.8" fill="none" stroke="#1a1a1a" stroke-width="0.72" transform="rotate(25 773.8 207.5)"/>
<path d="M752.7,206 L756.4,205.4 L756.4,214.4 L752.7,214.4Z M752.7,223 L756.4,222.8 L756.4,231.2 L752.7,231.2Z" fill="none" stroke="#1a1a1a" stroke-width="0.96" />
<path d="M759,196 Q763,193 763.8,196 L761,209 Q759,210 759,206Z M759,224 L763.8,222 L762,236 Q759,236 759,233Z" fill="none" stroke="#1a1a1a" stroke-width="0.96" />
<ellipse cx="752.9" cy="202.8" rx="1.3" ry="1.2" fill="none" stroke="#1a1a1a" stroke-width="0.84"/>
<ellipse cx="754" cy="219" rx="1.3" ry="1.2" fill="none" stroke="#1a1a1a" stroke-width="0.84"/>
<ellipse cx="752.5" cy="236.5" rx="1.3" ry="1.2" fill="none" stroke="#1a1a1a" stroke-width="0.84"/>
<ellipse cx="780.7" cy="184.9" rx="1.3" ry="1.2" fill="none" stroke="#1a1a1a" stroke-width="0.84"/>
<ellipse cx="785.4" cy="186.9" rx="1.3" ry="1.2" fill="none" stroke="#1a1a1a" stroke-width="0.84"/>
<ellipse cx="784.4" cy="213.4" rx="1.3" ry="1.2" fill="none" stroke="#1a1a1a" stroke-width="0.84"/>
<ellipse cx="782.2" cy="220.2" rx="1.3" ry="1.2" fill="none" stroke="#1a1a1a" stroke-width="0.84"/>
<ellipse cx="761.5" cy="239.8" rx="1.3" ry="1.2" fill="none" stroke="#1a1a1a" stroke-width="0.84"/>
<ellipse cx="761.5" cy="189.3" rx="1.3" ry="1.2" fill="none" stroke="#1a1a1a" stroke-width="0.84"/>
<path d="M720.9,233 L720.9,247.8 L723.9,247.8 L723.9,233 Z" fill="#fff" stroke="#1a1a1a" stroke-width="1.08" />
<path d="M720.9,234 L723.9,234.6" fill="none" stroke="#1a1a1a" stroke-width="0.6" />
<path d="M720.9,236 L723.9,236.6" fill="none" stroke="#1a1a1a" stroke-width="0.6" />
<path d="M720.9,238 L723.9,238.6" fill="none" stroke="#1a1a1a" stroke-width="0.6" />
<path d="M720.9,240 L723.9,240.6" fill="none" stroke="#1a1a1a" stroke-width="0.6" />
<path d="M720.9,242 L723.9,242.6" fill="none" stroke="#1a1a1a" stroke-width="0.6" />
<path d="M720.9,244 L723.9,244.6" fill="none" stroke="#1a1a1a" stroke-width="0.6" />
<path d="M720.9,246 L723.9,246.6" fill="none" stroke="#1a1a1a" stroke-width="0.6" />
<path d="M512.2,398.4 L500.2,403.5 Q497.5,405 498.5,407 L501.1,414.5 Q505,419 512.2,421.4 L539.4,429.9 L576.9,421.4 Q586,415 592.3,409.4 L616.1,400.9 L621.2,394.1 L631.5,382.2 Q630,377.5 626.4,377" fill="none" stroke="#1a1a1a" stroke-width="1.20" />
<path d="M508.7,400 L503.6,405.5 L505.5,413 Q509,417 514,418.5 L539.4,427.3 L576,418.8 Q585,412 590,406.9 L614,398.4 L618,392.5 L623,382.2 L619.5,376.2" fill="none" stroke="#1a1a1a" stroke-width="1.08" />
<ellipse cx="502.8" cy="405.5" rx="1.7" ry="1.3" fill="#fff" stroke="#1a1a1a" stroke-width="0.96"/>
<ellipse cx="515.6" cy="422.5" rx="1.7" ry="1.3" fill="#fff" stroke="#1a1a1a" stroke-width="0.96"/>
<ellipse cx="539.4" cy="428.2" rx="1.7" ry="1.3" fill="#fff" stroke="#1a1a1a" stroke-width="0.96"/>
<ellipse cx="581.5" cy="419.2" rx="1.7" ry="1.3" fill="#fff" stroke="#1a1a1a" stroke-width="0.96"/>
<ellipse cx="594.6" cy="406.2" rx="1.7" ry="1.3" fill="#fff" stroke="#1a1a1a" stroke-width="0.96"/>
<ellipse cx="604.3" cy="403.3" rx="1.7" ry="1.3" fill="#fff" stroke="#1a1a1a" stroke-width="0.96"/>
<ellipse cx="612" cy="400.5" rx="1.7" ry="1.3" fill="#fff" stroke="#1a1a1a" stroke-width="0.96"/>
<ellipse cx="626.5" cy="381.5" rx="1.7" ry="1.3" fill="#fff" stroke="#1a1a1a" stroke-width="0.96"/>
<g transform="rotate(33 663.2 345.7)"><rect x="654.2" y="341.7" width="18" height="8" fill="#fff" stroke="#1a1a1a" stroke-width="1"/><line x1="656.0" y1="341.7" x2="656.0" y2="349.7" stroke="#1a1a1a" stroke-width="0.6"/><line x1="657.5" y1="341.7" x2="657.5" y2="349.7" stroke="#1a1a1a" stroke-width="0.6"/><line x1="659.0" y1="341.7" x2="659.0" y2="349.7" stroke="#1a1a1a" stroke-width="0.6"/><line x1="660.5" y1="341.7" x2="660.5" y2="349.7" stroke="#1a1a1a" stroke-width="0.6"/><line x1="662.0" y1="341.7" x2="662.0" y2="349.7" stroke="#1a1a1a" stroke-width="0.6"/><line x1="663.5" y1="341.7" x2="663.5" y2="349.7" stroke="#1a1a1a" stroke-width="0.6"/><line x1="665.0" y1="341.7" x2="665.0" y2="349.7" stroke="#1a1a1a" stroke-width="0.6"/><line x1="666.5" y1="341.7" x2="666.5" y2="349.7" stroke="#1a1a1a" stroke-width="0.6"/><line x1="668.0" y1="341.7" x2="668.0" y2="349.7" stroke="#1a1a1a" stroke-width="0.6"/><line x1="669.5" y1="341.7" x2="669.5" y2="349.7" stroke="#1a1a1a" stroke-width="0.6"/><ellipse cx="672.2" cy="345.7" rx="2" ry="4" fill="#fff" stroke="#1a1a1a" stroke-width="1"/><ellipse cx="654.2" cy="345.7" rx="2" ry="4" fill="#fff" stroke="#1a1a1a" stroke-width="0.9"/></g>
<path d="M653,339.5 L644.7,336.4 L619.6,348.3 L603.8,337.8" fill="none" stroke="#333" stroke-width="0.9" />
<path d="M498.7,493.9 L497,504 L500,520 L510.6,535.1 L530,541 L542.3,543 L547,547.8 L580.1,549.3 L583.3,532 L594.4,533.5 L616.6,511.3 L632.4,516 L631.6,483.9 L630.8,470.9 L582.5,445.5 L549.4,459 L518.5,474.1 Z" fill="#fff" stroke="#1a1a1a" stroke-width="1.32" />
<path d="M498.7,493.9 L518.5,474.1 L549.4,459 L582.5,445.5 L630.8,470.9 L631.6,483.9" fill="none" stroke="#1a1a1a" stroke-width="1.32" />
<path d="M504.3,497 L521.7,478 L550,463 L582.5,449.5 L624.5,471.7 L612.6,490.7 Q600,500 581.7,509.7 L570,513 Q555,515 537.5,514 Q515,510 504.3,497" fill="none" stroke="#1a1a1a" stroke-width="1.08" />
<path d="M499.5,500.2 Q503,507 509,511.3 Q520,516 537.5,517.7 Q555,518 570,516 L583.3,511.3 L616.6,493 L631.6,483.9" fill="none" stroke="#1a1a1a" stroke-width="1.20" />
<path d="M500,506 Q510,518 537,522 L570,520 L583,515" fill="none" stroke="#1a1a1a" stroke-width="0.72" />
<ellipse cx="502.7" cy="495.5" rx="1.7" ry="1.3" fill="#fff" stroke="#1a1a1a" stroke-width="0.96"/>
<ellipse cx="520.1" cy="474.6" rx="1.7" ry="1.3" fill="#fff" stroke="#1a1a1a" stroke-width="0.96"/>
<ellipse cx="550.2" cy="459.5" rx="1.7" ry="1.3" fill="#fff" stroke="#1a1a1a" stroke-width="0.96"/>
<ellipse cx="582.5" cy="447.5" rx="1.7" ry="1.3" fill="#fff" stroke="#1a1a1a" stroke-width="0.96"/>
<ellipse cx="627.5" cy="472" rx="1.7" ry="1.3" fill="#fff" stroke="#1a1a1a" stroke-width="0.96"/>
<ellipse cx="539.9" cy="516.9" rx="1.7" ry="1.3" fill="#fff" stroke="#1a1a1a" stroke-width="0.96"/>
<ellipse cx="612.6" cy="493.5" rx="1.7" ry="1.3" fill="#fff" stroke="#1a1a1a" stroke-width="0.96"/>
<ellipse cx="583" cy="510.5" rx="1.7" ry="1.3" fill="#fff" stroke="#1a1a1a" stroke-width="0.96"/>
<path d="M521,487 L528,470 L535,494 M533,478 L533,500 M528,470 L540,488" fill="none" stroke="#1a1a1a" stroke-width="0.96" />
<path d="M509,504 Q512,498 518,500 Q522,505 519,510 Q513,512 509,508Z" fill="#fff" stroke="#1a1a1a" stroke-width="1.08" />
<ellipse cx="534.4" cy="506" rx="3.5" ry="2.3" fill="#fff" stroke="#1a1a1a" stroke-width="1.08"/>
<path d="M530.9,506 L530.9,498 L537.9,498 L537.9,506" fill="none" stroke="#1a1a1a" stroke-width="0.96" />
<path d="M540,490 L547,478 L552,472" fill="none" stroke="#1a1a1a" stroke-width="0.84" />
<path d="M552.7,481.2 Q550,495 548,507 L579,505 Q576,494 572.7,481.2" fill="#fff" stroke="#1a1a1a" stroke-width="1.20" />
<ellipse cx="562.7" cy="481.2" rx="10" ry="5.5" fill="#fff" stroke="#1a1a1a" stroke-width="1.20"/>
<ellipse cx="562.7" cy="481.8" rx="6.5" ry="3.2" fill="none" stroke="#1a1a1a" stroke-width="0.96"/>
<path d="M551,492 L550,506 M557,488 L556,506 M563,490 L563,506 M568,489 L570,505 M572,487 L575,504" fill="none" stroke="#1a1a1a" stroke-width="0.72" />
<path d="M548,497 L540,505 M578,495 L585,500" fill="none" stroke="#1a1a1a" stroke-width="0.72" />
<path d="M580,470 Q585,463 595,465 Q603,469 602,477 Q598,484 588,482 Q580,478 580,470Z" fill="#fff" stroke="#1a1a1a" stroke-width="1.08" />
<ellipse cx="590" cy="473" rx="5" ry="3" fill="none" stroke="#1a1a1a" stroke-width="0.96"/>
<ellipse cx="590" cy="473" rx="2.2" ry="1.3" fill="#333" stroke="#1a1a1a" stroke-width="0.84"/>
<path d="M594,459 L594,469 L597,469 M590,455 L592,468" fill="none" stroke="#1a1a1a" stroke-width="0.96" />
<path d="M602,478 L611,484 L607,490 L598,487" fill="none" stroke="#1a1a1a" stroke-width="0.96" />
<ellipse cx="601" cy="488" rx="3" ry="2" fill="#fff" stroke="#1a1a1a" stroke-width="0.96"/>
<ellipse cx="593" cy="494" rx="2.5" ry="1.8" fill="#fff" stroke="#1a1a1a" stroke-width="0.96"/>
<path d="M585,488 L587,500 L591,499 L589,487Z" fill="#fff" stroke="#1a1a1a" stroke-width="0.96" />
<path d="M620,500 Q620,496 625,496 Q631,496 631,501 L631,512 Q628,516 621,514 L620,500Z" fill="#fff" stroke="#1a1a1a" stroke-width="1.08" />
<ellipse cx="625.2" cy="503.8" rx="1.8" ry="1.3" fill="none" stroke="#1a1a1a" stroke-width="0.96"/>
<ellipse cx="624.5" cy="509.5" rx="1.8" ry="1.3" fill="none" stroke="#1a1a1a" stroke-width="0.96"/>
<path d="M627,483 L627,497 M630,480 L630,496" fill="none" stroke="#1a1a1a" stroke-width="0.96" />
<path d="M585,515 L590,527 L596,530 L605,520 L612,515 M590,520 L600,512 M595,525 L606,516" fill="none" stroke="#1a1a1a" stroke-width="0.96" />
<ellipse cx="592" cy="523" rx="3" ry="2.5" fill="#fff" stroke="#1a1a1a" stroke-width="0.96"/>
<path d="M547,536 L580.1,539.8 L580.1,549.3 L547,547.8 Z" fill="#fff" stroke="#1a1a1a" stroke-width="1.08" />
<ellipse cx="552.5" cy="539.5" rx="1.6" ry="1.1" fill="none" stroke="#1a1a1a" stroke-width="0.96"/>
<ellipse cx="575" cy="540.5" rx="1.6" ry="1.1" fill="none" stroke="#1a1a1a" stroke-width="0.96"/>
<path d="M504,516 L506,531 L512,532 L512,519" fill="#fff" stroke="#1a1a1a" stroke-width="1.08" />
<path d="M506,531 L508,520" fill="none" stroke="#1a1a1a" stroke-width="0.72" />
<path d="M515,523 L517,538 L523,539 L523,526" fill="#fff" stroke="#1a1a1a" stroke-width="1.08" />
<path d="M517,538 L519,527" fill="none" stroke="#1a1a1a" stroke-width="0.72" />
<path d="M527,528 L529,543 L535,544 L535,531" fill="#fff" stroke="#1a1a1a" stroke-width="1.08" />
<path d="M529,543 L531,532" fill="none" stroke="#1a1a1a" stroke-width="0.72" />
<path d="M539,531 L541,546 L547,547 L547,534" fill="#fff" stroke="#1a1a1a" stroke-width="1.08" />
<path d="M541,546 L543,535" fill="none" stroke="#1a1a1a" stroke-width="0.72" />
<path d="M503,515 L505,525 M500,509 L502,518" fill="none" stroke="#1a1a1a" stroke-width="0.96" />
<path d="M548,520 L552,533 M556,520 L559,530 M566,522 L567,532" fill="none" stroke="#1a1a1a" stroke-width="0.72" />
<path d="M540,460 L540,517" fill="none" stroke="#333" stroke-width="0.9" />
<path d="M563.9,445 L563.9,478" fill="none" stroke="#333" stroke-width="0.9" />
<path d="M540,549 L540,557" fill="none" stroke="#333" stroke-width="0.9" />
<path d="M563.9,551 L563.9,560" fill="none" stroke="#333" stroke-width="0.9" />
<path d="M502,474.5 L502,492" fill="none" stroke="#333" stroke-width="0.9" />
<path d="M550.3,584.8 L550.3,588 A14,8 0 0 0 578.3,588 L578.3,584.8" fill="#fff" stroke="#1a1a1a" stroke-width="1.20" />
<ellipse cx="564.3" cy="584.8" rx="14" ry="8" fill="#fff" stroke="#1a1a1a" stroke-width="1.32"/>
<ellipse cx="564.3" cy="585.2" rx="9.5" ry="5" fill="none" stroke="#1a1a1a" stroke-width="1.08"/>
<g transform="rotate(-15 486.9 525)"><rect x="483" y="521.5" width="8" height="7" rx="1" fill="#fff" stroke="#1a1a1a" stroke-width="1"/><ellipse cx="484" cy="525" rx="1.5" ry="3.5" fill="#fff" stroke="#1a1a1a" stroke-width="0.8"/><line x1="486" y1="522" x2="486" y2="528" stroke="#1a1a1a" stroke-width="0.5"/><line x1="488" y1="522" x2="488" y2="528" stroke="#1a1a1a" stroke-width="0.5"/></g>
<path d="M657.3,448.4 L664,440 Q667,436 671,437 L676,436 Q680,433.5 684,436.5 L690,433 L690,470 L668,500 L663.2,492 L657.3,488.6 Z" fill="#fff" stroke="#1a1a1a" stroke-width="1.20" />
<ellipse cx="667.5" cy="439.5" rx="1.4" ry="1.1" fill="none" stroke="#1a1a1a" stroke-width="0.84"/>
<path d="M659.3,449 L668,438.5" fill="none" stroke="#1a1a1a" stroke-width="0.66" />
<path d="M660,455 L663.9,454.5 L663.9,463.6 L660,464 Z M660,472 L663.9,471.5 L663.9,480.7 L660,481 Z" fill="none" stroke="#1a1a1a" stroke-width="0.96" />
<ellipse cx="660.5" cy="451.5" rx="1.3" ry="1.2" fill="none" stroke="#1a1a1a" stroke-width="0.84"/>
<ellipse cx="661.5" cy="467.5" rx="1.3" ry="1.2" fill="none" stroke="#1a1a1a" stroke-width="0.84"/>
<ellipse cx="661.5" cy="485" rx="1.3" ry="1.2" fill="none" stroke="#1a1a1a" stroke-width="0.84"/>
<path d="M667.8,453 L671.8,451.7 L689.6,442.4 L687,431.2 L705.4,430.6 L720,435.2 L720,455.6 L719.3,457 L720,497.9 L689.6,511 L676.4,506.5 L668.5,501.8 Z" fill="#fff" stroke="#1a1a1a" stroke-width="1.32" />
<path d="M668.5,502 L668.5,458.0 Q669.5,452.0 676.5,449.0 L693,443.0" fill="none" stroke="#1a1a1a" stroke-width="1.08" />
<path d="M673,503 L673,461.0 Q673.5,456.0 678,453.5 L695,447.0" fill="none" stroke="#1a1a1a" stroke-width="0.90" />
<path d="M674.3,502 L674.3,454.7 Q675.3,448.7 682.3,445.7 L695,441.5" fill="none" stroke="#1a1a1a" stroke-width="1.08" />
<path d="M679,503 L679,457.7 Q679.5,452.7 684,450.2 L697,445.5" fill="none" stroke="#1a1a1a" stroke-width="0.90" />
<path d="M679.6,502 L679.6,451.4 Q680.6,445.4 687.6,442.4 L697,440.0" fill="none" stroke="#1a1a1a" stroke-width="1.08" />
<path d="M684.4,503 L684.4,454.4 Q684.9,449.4 689.4,446.9 L699,444.0" fill="none" stroke="#1a1a1a" stroke-width="0.90" />
<path d="M684.9,502 L684.9,448.1 Q685.9,442.1 692.9,439.1 L699,438.5" fill="none" stroke="#1a1a1a" stroke-width="1.08" />
<path d="M689.7,503 L689.7,451.1 Q690.2,446.1 694.7,443.6 L701,442.5" fill="none" stroke="#1a1a1a" stroke-width="0.90" />
<path d="M669,485 L673,485 L673,500 L669,500 Z" fill="#fff" stroke="#1a1a1a" stroke-width="0.96" />
<path d="M675,492 L679,492 L679,505 L675,505Z" fill="#fff" stroke="#1a1a1a" stroke-width="0.96" />
<path d="M680,495 L684,495 L684,506 L680,506Z" fill="#fff" stroke="#1a1a1a" stroke-width="0.84" />
<path d="M689.6,459.6 L719.3,457 L720,497.9 L689.6,511 Z" fill="#fff" stroke="#1a1a1a" stroke-width="1.20" />
<path d="M692,462 L716.5,460 L717,495.5 L692,507.5 Z" fill="none" stroke="#1a1a1a" stroke-width="0.72" />
<circle cx="708.1" cy="467.5" r="3.6" fill="#fff" stroke="#1a1a1a" stroke-width="1.20"/>
<circle cx="708.1" cy="467.5" r="1.7" fill="#333" stroke="#1a1a1a" stroke-width="1.08"/>
<circle cx="708.7" cy="484.7" r="3.6" fill="#fff" stroke="#1a1a1a" stroke-width="1.20"/>
<circle cx="708.7" cy="484.7" r="1.7" fill="#333" stroke="#1a1a1a" stroke-width="1.08"/>
<path d="M695,466 Q698,463 702,466 L702,474 Q698,476 695,474Z M695,483 Q698,480 702,483 L702,492 Q698,494 695,492Z" fill="none" stroke="#1a1a1a" stroke-width="0.96" />
<path d="M704,470 L694,478 M706,473 L696,481 M705,487 L694,496 M707,490 L697,499" fill="none" stroke="#1a1a1a" stroke-width="0.96" />
<path d="M691,500 L718,489 M691,504 L718,493" fill="none" stroke="#1a1a1a" stroke-width="0.72" />
<path d="M705,432 Q712,428 719,433 L719,446 Q713,447 705,446 Z" fill="none" stroke="#1a1a1a" stroke-width="1.20" />
<ellipse cx="693.5" cy="500" rx="1.3" ry="1.1" fill="none" stroke="#1a1a1a" stroke-width="0.84"/>
<ellipse cx="713" cy="475" rx="1.3" ry="1.1" fill="none" stroke="#1a1a1a" stroke-width="0.84"/>
<ellipse cx="714" cy="493" rx="1.3" ry="1.1" fill="none" stroke="#1a1a1a" stroke-width="0.84"/>
<ellipse cx="693" cy="478" rx="1.3" ry="1.1" fill="none" stroke="#1a1a1a" stroke-width="0.84"/>
<path d="M689.6,442.4 L720,436" fill="none" stroke="#1a1a1a" stroke-width="0.96" />
<path d="M686,441 Q686,434 693,433 L703,432 Q708,433 708,439 L708,449 Q700,453 688,452 Z" fill="#fff" stroke="#1a1a1a" stroke-width="1.20" />
<ellipse cx="697" cy="441.5" rx="6.2" ry="4.2" fill="#fff" stroke="#1a1a1a" stroke-width="1.32"/>
<ellipse cx="697" cy="441.8" rx="3.8" ry="2.4" fill="none" stroke="#1a1a1a" stroke-width="0.84"/>
<path d="M707,436 Q709,429 715,429 L719,430.5 Q722.5,432.5 722,438 L721,456 L708,458 Z" fill="#fff" stroke="#1a1a1a" stroke-width="1.20" />
<path d="M709,440 Q711,434 716,434 L720,436 M710,446 L720,443" fill="none" stroke="#1a1a1a" stroke-width="0.84" />
<path d="M690,457 L718,452" fill="none" stroke="#1a1a1a" stroke-width="0.96" />
<path d="M712,468.8 L735.5,479" fill="none" stroke="#333" stroke-width="0.9" />
<path d="M710.7,487.3 L724,499.2" fill="none" stroke="#333" stroke-width="0.9" />
<path d="M685.6,519 L713.4,509" fill="none" stroke="#333" stroke-width="0.9" />
<path d="M700.3,411.3 L714,418.8" fill="none" stroke="#333" stroke-width="0.9" />
<path d="M700.3,411.3 L700.3,433.9" fill="none" stroke="#333" stroke-width="0.9" />
<circle cx="727.9" cy="504.7" r="3.4" fill="#fff" stroke="#1a1a1a" stroke-width="1.1"/>
<circle cx="728.5" cy="505.09999999999997" r="1.53" fill="none" stroke="#1a1a1a" stroke-width="0.6"/>
<path d="M735.3,494 Q735.5,491.5 738,490.5 L761,479.7 Q763.6,479 763.6,481.5 L763.6,487 L745,525 Q742,528.5 738,529.5 Q735.3,529.5 735.3,527 Z" fill="#fff" stroke="#1a1a1a" stroke-width="1.08" />
<path d="M738.8,495.5 L760.5,483.5 L760.5,487 M738.8,495.5 L738.8,503.7 L743.7,502 M738.8,509.1 L743.7,507 M738.8,509.1 L738.8,525.5 L743.7,523" fill="none" stroke="#1a1a1a" stroke-width="0.96" />
<path d="M744.7,499 Q745,496.8 748,495.5 L770.5,484.4 Q775,484 777.4,489.3 L777.4,521.5 Q776.5,526 774.5,526.5 L754.6,535.9 Q748,536.5 745.7,533.4 Z" fill="#fff" stroke="#1a1a1a" stroke-width="1.32" />
<path d="M747.5,499 L747.5,532 M748.2,498 L770,487.5 Q774,487 775,491" fill="none" stroke="#1a1a1a" stroke-width="0.72" />
<path d="M749,502 L770,493.5" fill="none" stroke="#1a1a1a" stroke-width="0.96" />
<path d="M749,505.0 L760,502.2" fill="none" stroke="#1a1a1a" stroke-width="0.72" />
<path d="M749,507.2 L760,504.4" fill="none" stroke="#1a1a1a" stroke-width="0.72" />
<path d="M749,509.4 L760,506.6" fill="none" stroke="#1a1a1a" stroke-width="0.72" />
<path d="M749,511.6 L760,508.8" fill="none" stroke="#1a1a1a" stroke-width="0.72" />
<path d="M749,513.8 L760,511.0" fill="none" stroke="#1a1a1a" stroke-width="0.72" />
<path d="M749,516.0 L760,513.2" fill="none" stroke="#1a1a1a" stroke-width="0.72" />
<path d="M749,518.2 L760,515.4" fill="none" stroke="#1a1a1a" stroke-width="0.72" />
<path d="M749,520.4 L760,517.6" fill="none" stroke="#1a1a1a" stroke-width="0.72" />
<path d="M749,522.6 L760,519.8" fill="none" stroke="#1a1a1a" stroke-width="0.72" />
<path d="M749,524.8 L760,522.0" fill="none" stroke="#1a1a1a" stroke-width="0.72" />
<path d="M749,527.0 L760,524.2" fill="none" stroke="#1a1a1a" stroke-width="0.72" />
<path d="M749,529.2 L760,526.4" fill="none" stroke="#1a1a1a" stroke-width="0.72" />
<path d="M760,504 L772,499 L772,521 L760,527 Z" fill="none" stroke="#333" stroke-width="0.6"/>
<path d="M762,508 Q765,504 768,507 Q766,511 762,510 M764,515 Q768,511 771,514 Q768,518 764,517 M762,522 L766,520 M767,519 L770,518 M762,513 L765,511" fill="none" stroke="#222" stroke-width="1.6"/>
<path d="M773.5,498 L776.5,496.5 L776.5,520.5 L773.5,522 Z" fill="#333"/>
<path d="M774,501 L776,500 M774,506 L776,505 M774,511 L776,510 M774,516 L776,515" stroke="#eee" stroke-width="1"/>
<path d="M773,497 L773,521 L777.4,519" fill="none" stroke="#1a1a1a" stroke-width="1.44" />
<path d="M519.2,306 L519.2,321.3 M523,304 L523,320" fill="none" stroke="#1a1a1a" stroke-width="0.84" />
<path d="M527.6,307 Q540,309 546.6,316.6 Q548,322 544.2,326 Q538,329 532,326" fill="none" stroke="#1a1a1a" stroke-width="0.96" />
<path d="M532.3,300 L553.7,312.6 M536,299 L556,310" fill="none" stroke="#1a1a1a" stroke-width="0.72" />
<path d="M546.6,297.6 L557.3,304.7 L557.3,310" fill="none" stroke="#1a1a1a" stroke-width="0.96" />
<ellipse cx="527" cy="301" rx="2.6" ry="1.8" fill="#fff" stroke="#1a1a1a" stroke-width="0.96"/>
<path d="M510,318 Q514,312 520,313 M506,323 Q512,318 518,320" fill="none" stroke="#1a1a1a" stroke-width="0.72" />
<path d="M525,330 Q530,326 537,328 L540,334 M515,332 L523,328" fill="none" stroke="#1a1a1a" stroke-width="0.72" />
<path d="M507,283.5 h3v3h-3z M511,283.5 h3v3h-3z M515,283.5 h3v3h-3z M507,287.5 h3v3h-3z M515,287.5 h3v3h-3z" fill="#222"/>
<path d="M504,292 L504,298 L520,298 L530,292" fill="none" stroke="#1a1a1a" stroke-width="0.84" />
<path d="M505,296 L508,300 L512,296" fill="none" stroke="#1a1a1a" stroke-width="0.72" />
<path d="M688.5,160 Q690,157 693,156 L693.5,212" fill="none" stroke="#1a1a1a" stroke-width="0.96" />
<path d="M694,158 Q695.5,155 698.5,154 L699.5,219" fill="none" stroke="#1a1a1a" stroke-width="0.96" />
<path d="M699.5,156 Q701,153 704,152 L705,221" fill="none" stroke="#1a1a1a" stroke-width="0.96" />
<path d="M686.5,170 L707,168 M686.8,178 L695,176" fill="none" stroke="#1a1a1a" stroke-width="0.60" />
<path d="M711,148 Q713,144.5 716,145.5 L719,150 M725,148 Q727,144.5 730,145.5 L733,150 M738,148 Q740,145 743,146 L746,150" fill="none" stroke="#1a1a1a" stroke-width="1.08" />
<ellipse cx="732" cy="187" rx="6.5" ry="9.5" fill="none" stroke="#1a1a1a" stroke-width="1.08" transform="rotate(20 732 187)"/>
<path d="M705,160 L757,187.5" fill="none" stroke="#333" stroke-width="0.9" />
<path d="M697.5,175 L705,165 L705,221 L697.5,217 Z" fill="none" stroke="#1a1a1a" stroke-width="0.96" />
<path d="M500.5,312 L531,295.5 L554,306" fill="none" stroke="#1a1a1a" stroke-width="0.96" />
<path d="M504,319 Q518,322 530,326 Q545,330 552,327" fill="none" stroke="#1a1a1a" stroke-width="0.96" />
<path d="M528,322 Q533,318 538,321 Q541,326 537,330 Q531,331 528,327Z" fill="#fff" stroke="#1a1a1a" stroke-width="1.08" />
<path d="M512,308 Q516,304 521,306 L523,312 Q518,315 513,313Z" fill="none" stroke="#1a1a1a" stroke-width="0.96" />
<path d="M540,302 Q545,300 549,303 L550,309 Q546,311 541,309Z" fill="none" stroke="#1a1a1a" stroke-width="0.96" />
<path d="M525,312 L531,316 M533,306 L540,313 M545,315 L551,320" fill="none" stroke="#1a1a1a" stroke-width="0.84" />
<path d="M557,318 Q548,318 546,326" fill="none" stroke="#1a1a1a" stroke-width="0.84" />
<path d="M596,462 Q603,459 609,464 L612,470" fill="none" stroke="#1a1a1a" stroke-width="1.08" />
<ellipse cx="606" cy="466" rx="2.6" ry="1.8" fill="#fff" stroke="#1a1a1a" stroke-width="0.96"/>
<path d="M606,480 L620,473 M600,497 L615,488 M575,493 L585,487" fill="none" stroke="#1a1a1a" stroke-width="0.96" />
<ellipse cx="611" cy="489" rx="2" ry="1.4" fill="none" stroke="#1a1a1a" stroke-width="0.96"/>
<path d="M523,505 Q527,499 533,500 M514,492 L520,481" fill="none" stroke="#1a1a1a" stroke-width="0.96" />
<path d="M600,510 Q605,505 611,507 L614,513 Q609,518 603,516Z" fill="#fff" stroke="#1a1a1a" stroke-width="1.08" />
<path d="M564,276 L564,284" fill="none" stroke="#333" stroke-width="0.9" />
<path d="M567,441.2 L571,440.2" stroke="#fff" stroke-width="2.4"/>
<path d="M567.5,569.8 L571.5,568.8" stroke="#fff" stroke-width="2.4"/>
</svg>
</body></html>
